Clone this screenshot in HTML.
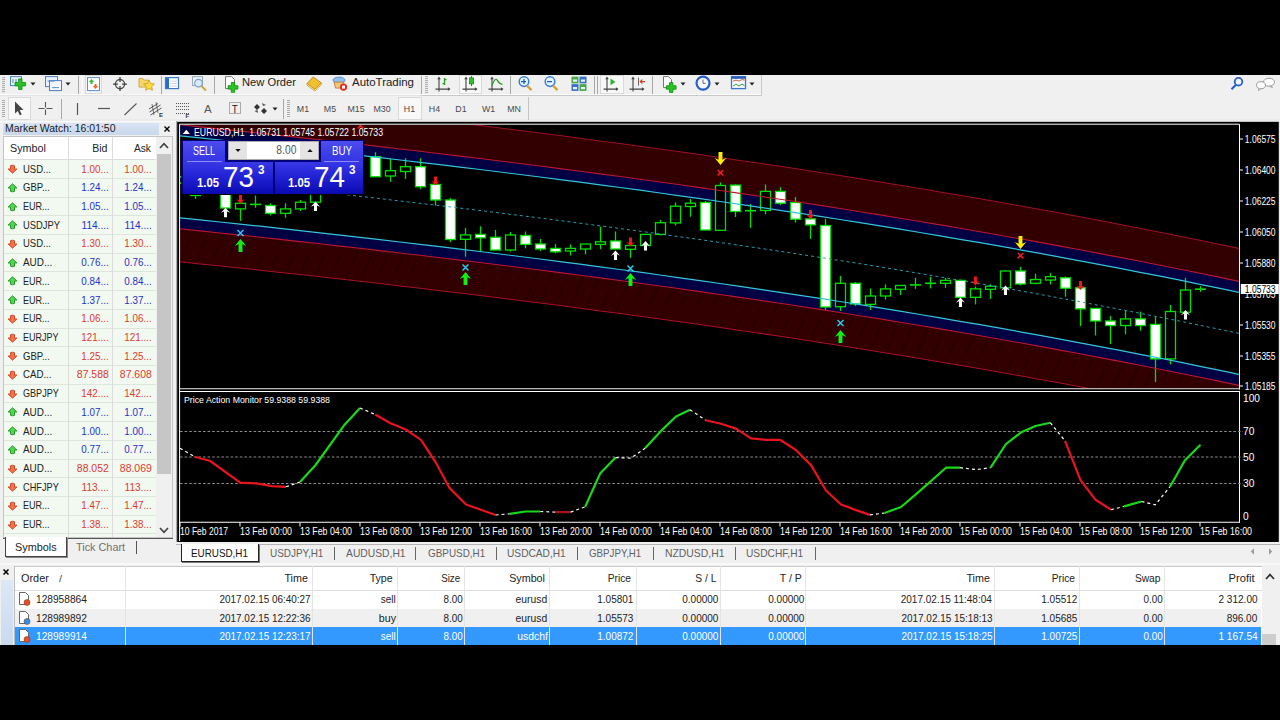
<!DOCTYPE html>
<html><head><meta charset="utf-8"><title>MetaTrader</title>
<style>
*{box-sizing:border-box;margin:0;padding:0}
html,body{width:1280px;height:720px;overflow:hidden;background:#000}
body{position:relative;font-family:'Liberation Sans',sans-serif;font-size:12px;color:#000}
.abs,.b{position:absolute}
.t{position:absolute;white-space:nowrap;line-height:14px}
</style></head><body>
<div class="abs" style="left:0;top:75px;width:1280px;height:47px;background:#f0f0f0"><svg width="1280" height="47" viewBox="0 75 1280 47" style="position:absolute;left:0;top:0" font-family="'Liberation Sans',sans-serif">
<rect x="0" y="94" width="762" height="1" fill="#fcfcfc"/>
<rect x="0" y="95" width="762" height="1" fill="#dcdcdc" opacity="0.6"/>
<rect x="0" y="119.700" width="1280" height="1" fill="#e2e2e2"/>
<rect x="0" y="120.700" width="1280" height="1.300" fill="#fafafa"/>
<rect x="2" y="100" width="3" height="1" fill="#aaa"/>
<rect x="2" y="102" width="3" height="1" fill="#aaa"/>
<rect x="2" y="104" width="3" height="1" fill="#aaa"/>
<rect x="2" y="106" width="3" height="1" fill="#aaa"/>
<rect x="2" y="108" width="3" height="1" fill="#aaa"/>
<rect x="2" y="110" width="3" height="1" fill="#aaa"/>
<rect x="2" y="112" width="3" height="1" fill="#aaa"/>
<rect x="2" y="114" width="3" height="1" fill="#aaa"/>
<rect x="2" y="116" width="3" height="1" fill="#aaa"/>
<g transform="translate(0,-0.9)">
<rect x="2" y="78" width="3" height="1" fill="#aaa"/>
<rect x="2" y="80" width="3" height="1" fill="#aaa"/>
<rect x="2" y="82" width="3" height="1" fill="#aaa"/>
<rect x="2" y="84" width="3" height="1" fill="#aaa"/>
<rect x="2" y="86" width="3" height="1" fill="#aaa"/>
<rect x="2" y="88" width="3" height="1" fill="#aaa"/>
<rect x="2" y="90" width="3" height="1" fill="#aaa"/>
<rect x="2" y="92" width="3" height="1" fill="#aaa"/>
<rect x="10.5" y="77.5" width="11" height="9" fill="#eaf2fc" stroke="#4a84c8"/>
<path d="M13 84 v-4 m3 3 v-3" stroke="#4a84c8" stroke-width="1"/>
<path d="M18.600 79.800 h3.400 v3.600 h3.600 v3.400 h-3.600 v3.600 h-3.400 v-3.600 h-3.600 v-3.400 h3.600 z" fill="#28c428" stroke="#0c8a0c" stroke-width="0.8"/>
<path d="M30.5 83.5 h5 l-2.5 3 z" fill="#222"/>
<rect x="45.500" y="77.500" width="12" height="10" fill="#eaf2fc" stroke="#4a7ec0"/>
<rect x="49.500" y="81.500" width="12" height="10" fill="#f4f8fe" stroke="#4a7ec0"/>
<path d="M47.5 82 h7 M52 88.500 h7" stroke="#5a8ed0" stroke-width="1"/>
<path d="M65.5 83.5 h5 l-2.5 3 z" fill="#222"/>
<rect x="78.0" y="77" width="1" height="18" fill="#a8a8a8"/>
<rect x="81.500" y="77" width="1.500" height="18" fill="#fafafa"/>
<rect x="85.5" y="76.5" width="16.0" height="18.0" fill="#f8f8f8" stroke="#d9d9d9" stroke-width="1"/>
<rect x="87.5" y="78.500" width="12" height="13" fill="#fff" stroke="#5a8ed0"/>
<path d="M91.5 80 l2.6 3 h-1.6 v2 h-2 v-2 h-1.600 z" fill="#30c030"/>
<path d="M95.500 90 l-2.600 -3 h1.600 v-2 h2 v2 h1.600 z" fill="#f06030"/>
<circle cx="120" cy="85" r="4.6" fill="none" stroke="#444" stroke-width="1.3"/>
<path d="M120 78 v5 m0 4 v5 M113 85 h5 m4 0 h5" stroke="#444" stroke-width="1.3"/>
<path d="M139 79.500 h4 l1 1.500 h5 v7 h-10 z" fill="#f6d66a" stroke="#c8a030" stroke-width="0.8"/>
<path d="M149 81 l1.700 3.400 3.700 0.500 -2.700 2.600 0.700 3.700 -3.400 -1.800 -3.400 1.800 0.700 -3.700 -2.700 -2.600 3.700 -0.500 z" fill="#ffd83a" stroke="#c89a18" stroke-width="0.8"/>
<rect x="161.0" y="77" width="1" height="18" fill="#a8a8a8"/>
<rect x="165.500" y="78.500" width="13" height="11" fill="#fff" stroke="#3c78c0" stroke-width="1.2"/>
<rect x="166" y="79" width="3" height="10" fill="#2a6ad0"/>
<path d="M170 82 h7 M170 84.500 h7 M170 87 h7" stroke="#c0c8d8" stroke-width="0.8"/>
<rect x="192.500" y="77.500" width="10" height="9" fill="#eef2f8" stroke="#9ab"/>
<circle cx="198.500" cy="84" r="3.800" fill="#d8ecfc" stroke="#7aa0c8" stroke-width="1.2"/>
<path d="M201.500 87 l4.500 4.500" stroke="#d8a030" stroke-width="2"/>
<rect x="214.0" y="77" width="1" height="18" fill="#a8a8a8"/>
<path d="M225.500 77.500 h6 l3 3 v9 h-9 z" fill="#fff" stroke="#777" stroke-width="1"/>
<path d="M231.300 83.400 h3.400 v3.200 h3.200 v3.400 h-3.200 v3.200 h-3.400 v-3.200 h-3.200 v-3.400 h3.200 z" fill="#28c428" stroke="#0c8a0c" stroke-width="0.8"/>
<text x="242" y="87.300" font-size="11.6" fill="#222" textLength="54" lengthAdjust="spacingAndGlyphs">New Order</text>
<path d="M307 84.500 L313.200 77.800 L321.300 83.800 L315 90.300 Z" fill="#f0c030" stroke="#b8860c" stroke-width="0.900"/>
<path d="M307 84.500 L315 90.300 L321.300 83.800 L321.300 85.600 L315 92 L307 86.300 Z" fill="#fbe9a0" stroke="#b8860c" stroke-width="0.600"/>
<ellipse cx="339" cy="81" rx="6" ry="3" fill="#8ec0f0" stroke="#4a80c0" stroke-width="0.8"/>
<path d="M334 83 h10 l-1.500 6 h-7 z" fill="#f0c878" stroke="#a87a30" stroke-width="0.8"/>
<circle cx="343.500" cy="88" r="3.600" fill="#e82a1a"/><rect x="342" y="86.500" width="3" height="3" fill="#fff"/>
<text x="352" y="87.300" font-size="11.6" fill="#222" textLength="62" lengthAdjust="spacingAndGlyphs">AutoTrading</text>
<rect x="421.0" y="77" width="1" height="18" fill="#a8a8a8"/>
<rect x="425" y="77" width="3" height="1" fill="#aaa"/>
<rect x="425" y="79" width="3" height="1" fill="#aaa"/>
<rect x="425" y="81" width="3" height="1" fill="#aaa"/>
<rect x="425" y="83" width="3" height="1" fill="#aaa"/>
<rect x="425" y="85" width="3" height="1" fill="#aaa"/>
<rect x="425" y="87" width="3" height="1" fill="#aaa"/>
<rect x="425" y="89" width="3" height="1" fill="#aaa"/>
<rect x="425" y="91" width="3" height="1" fill="#aaa"/>
<rect x="425" y="93" width="3" height="1" fill="#aaa"/>
<path d="M439.0 79 v13.500 M435.5 90 h14" stroke="#444" stroke-width="1.100" fill="none"/><path d="M439.0 77.500 l-1.800 2.600 h3.600 z M450.5 90 l-2.600 -1.800 v3.600 z" fill="#444"/>
<path d="M444.500 79 v7 M442.500 84.500 h2 M444.500 80.500 h2" stroke="#2a9a2a" stroke-width="1.300" fill="none"/>
<rect x="459.5" y="76.5" width="22.0" height="18.0" fill="#f8f8f8" stroke="#d9d9d9" stroke-width="1"/>
<path d="M466.0 79 v13.500 M462.5 90 h14" stroke="#444" stroke-width="1.100" fill="none"/><path d="M466.0 77.500 l-1.800 2.600 h3.600 z M477.5 90 l-2.600 -1.800 v3.600 z" fill="#444"/>
<path d="M471.500 77 v10" stroke="#1a8a1a" stroke-width="1"/><rect x="469.500" y="78.800" width="4" height="6" fill="#30c030" stroke="#1a8a1a" stroke-width="0.800"/>
<path d="M492.0 79 v13.500 M488.5 90 h14" stroke="#444" stroke-width="1.100" fill="none"/><path d="M492.0 77.500 l-1.800 2.600 h3.600 z M503.5 90 l-2.600 -1.800 v3.600 z" fill="#444"/>
<path d="M492 86.500 q3 -9 5.500 -5 t5 3.500" stroke="#2a9a2a" stroke-width="1.200" fill="none"/>
<rect x="510.0" y="77" width="1" height="18" fill="#a8a8a8"/>
<circle cx="524" cy="82.500" r="4.800" fill="#e8f4ff" stroke="#3a80d0" stroke-width="1.500"/>
<path d="M527 86.500 l4.500 4.500" stroke="#d8a030" stroke-width="2.200"/>
<path d="M521 82.500 h5" stroke="#2060b0" stroke-width="1.300"/>
<path d="M524 80 v5" stroke="#2060b0" stroke-width="1.300"/>
<circle cx="550" cy="82.500" r="4.800" fill="#e8f4ff" stroke="#3a80d0" stroke-width="1.500"/>
<path d="M553 86.500 l4.500 4.500" stroke="#d8a030" stroke-width="2.200"/>
<path d="M547 82.500 h5" stroke="#2060b0" stroke-width="1.300"/>
<rect x="571.500" y="77.500" width="7" height="6.800" fill="#4aa848"/><rect x="579.500" y="77.500" width="7" height="6.800" fill="#3a70cc"/>
<rect x="571.500" y="85" width="7" height="6.800" fill="#3a70cc"/><rect x="579.500" y="85" width="7" height="6.800" fill="#4aa848"/>
<path d="M573 81.500 h4 M581 81.500 h4 M573 89 h4 M581 89 h4" stroke="#e8f0ff" stroke-width="2.200"/>
<rect x="594.0" y="77" width="1" height="18" fill="#a8a8a8"/>
<rect x="597.0" y="77" width="1" height="18" fill="#a8a8a8"/>
<rect x="600.5" y="76.5" width="23.0" height="18.0" fill="#f8f8f8" stroke="#d9d9d9" stroke-width="1"/>
<path d="M607.0 79 v13.500 M603.5 90 h14" stroke="#444" stroke-width="1.100" fill="none"/><path d="M607.0 77.500 l-1.800 2.600 h3.600 z M618.5 90 l-2.600 -1.800 v3.600 z" fill="#444"/>
<path d="M610.500 79.500 l5 3.300 -5 3.300 z" fill="#30b030"/>
<path d="M633.0 79 v13.500 M629.5 90 h14" stroke="#444" stroke-width="1.100" fill="none"/><path d="M633.0 77.500 l-1.800 2.600 h3.600 z M644.5 90 l-2.600 -1.800 v3.600 z" fill="#444"/>
<path d="M638.500 78.500 v8" stroke="#666" stroke-width="1"/><path d="M645 82.500 h-4.500 m1.800 -2 l-2 2 2 2" stroke="#d04020" stroke-width="1.200" fill="none"/>
<rect x="652.0" y="77" width="1" height="18" fill="#a8a8a8"/>
<path d="M663.500 77.500 h5 l3 3 v8 h-8 z" fill="#fff" stroke="#777" stroke-width="1"/>
<path d="M669.500 83.500 h3.400 v3.200 h3.200 v3.400 h-3.200 v3.200 h-3.400 v-3.200 h-3.200 v-3.400 h3.200 z" fill="#28c428" stroke="#0c8a0c" stroke-width="0.800"/>
<path d="M680.5 83.5 h5 l-2.5 3 z" fill="#222"/>
<circle cx="703" cy="84" r="6.500" fill="#f4f8ff" stroke="#2a5ec8" stroke-width="2.200"/>
<path d="M703 80.500 v3.800 h2.600" stroke="#666" stroke-width="1" fill="none"/>
<path d="M714.5 83.5 h5 l-2.5 3 z" fill="#222"/>
<rect x="731.500" y="77.500" width="14" height="12" fill="#f4f8ff" stroke="#3a78c8" stroke-width="1.300"/><rect x="731.500" y="77.500" width="14" height="2.200" fill="#2a5cb8"/>
<path d="M733 82 l3 -1 3 1 3 -1.500 2.500 0.500" stroke="#d05030" stroke-width="0.900" fill="none"/>
<path d="M733 87 l3 -2 3 2 3 -2 2.500 1.500" stroke="#2a9a2a" stroke-width="0.900" fill="none"/>
<path d="M749.5 83.5 h5 l-2.5 3 z" fill="#222"/>
<path d="M761.500 75 V96.400 H421" stroke="#c8c8c8" stroke-width="1" fill="none"/>
<g transform="translate(0,1.6)">
<circle cx="1238.500" cy="81" r="3.800" fill="#f4f8ff" stroke="#2a5ec8" stroke-width="1.800"/>
<path d="M1236 84 l-4.500 4.500" stroke="#2a5ec8" stroke-width="2.200"/>
<ellipse cx="1269" cy="81.500" rx="5.500" ry="4" fill="#fff" stroke="#9a9a9a" stroke-width="1"/>
<ellipse cx="1261" cy="84.500" rx="4.500" ry="3.500" fill="#fff" stroke="#9a9a9a" stroke-width="1"/>
<path d="M1259 87.500 l-0.500 2.500 2.500 -2 M1271 85 l1.500 2 -3 -1.500" stroke="#9a9a9a" stroke-width="0.900" fill="#fff"/>
</g>
</g>
<rect x="8.5" y="97.5" width="22.0" height="22.0" fill="#f8f8f8" stroke="#d9d9d9" stroke-width="1"/>
<path d="M15 101.500 v12 l2.800 -2.600 2 4.400 1.900 -0.900 -2 -4.300 3.800 -0.200 z" fill="#454545"/>
<path d="M45.500 102 v13 M38.500 108.500 h14" stroke="#555" stroke-width="1.100"/>
<rect x="44.500" y="107.500" width="2" height="2" fill="#f0f0f0"/>
<rect x="61.0" y="99" width="1" height="20" fill="#a8a8a8"/>
<path d="M77.500 103 v12" stroke="#555" stroke-width="1.200"/>
<path d="M98 108.500 h12" stroke="#555" stroke-width="1.200"/>
<path d="M124.500 115 l12 -11.500" stroke="#606060" stroke-width="1.200"/>
<path d="M149.500 112 l11 -7 M150.500 115 l11 -7 M149 109 l9 -5.500" stroke="#444" stroke-width="0.900"/>
<path d="M152 104 l2 11 M156 102 l2 11" stroke="#444" stroke-width="0.700"/>
<text x="159" y="116.500" font-size="6" font-weight="bold" fill="#333">E</text>
<path d="M176 103.5 h13" stroke="#555" stroke-width="1" stroke-dasharray="1 1"/>
<path d="M176 106.5 h13" stroke="#555" stroke-width="1" stroke-dasharray="1 1"/>
<path d="M176 109.5 h13" stroke="#555" stroke-width="1" stroke-dasharray="1 1"/>
<path d="M176 113.5 h13" stroke="#555" stroke-width="1" stroke-dasharray="1 1"/>
<text x="185.500" y="117.500" font-size="6" font-weight="bold" fill="#333">F</text>
<text x="204" y="112.800" font-size="11.500" fill="#555">A</text>
<rect x="229.500" y="102.500" width="11" height="11" fill="none" stroke="#666" stroke-width="1" stroke-dasharray="1 1"/>
<text x="231.800" y="112.500" font-size="10" fill="#222">T</text>
<path d="M257 104 l3 3 -3 3 -3 -3 z M264 108 l3 3 -3 3 -3 -3 z" fill="#333"/>
<path d="M262 103 l4 2 -3 1 z M258 113 l-3.500 -2 3 -1 z" fill="#555"/>
<path d="M272.5 107.5 h5 l-2.5 3 z" fill="#222"/>
<rect x="283.0" y="99" width="1" height="20" fill="#a8a8a8"/>
<rect x="287" y="100" width="3" height="1" fill="#aaa"/>
<rect x="287" y="102" width="3" height="1" fill="#aaa"/>
<rect x="287" y="104" width="3" height="1" fill="#aaa"/>
<rect x="287" y="106" width="3" height="1" fill="#aaa"/>
<rect x="287" y="108" width="3" height="1" fill="#aaa"/>
<rect x="287" y="110" width="3" height="1" fill="#aaa"/>
<rect x="287" y="112" width="3" height="1" fill="#aaa"/>
<rect x="287" y="114" width="3" height="1" fill="#aaa"/>
<rect x="287" y="116" width="3" height="1" fill="#aaa"/>
<rect x="398.5" y="97.5" width="23.0" height="22.0" fill="#f8f8f8" stroke="#d9d9d9" stroke-width="1"/>
<text x="303.0" y="112.300" font-size="9.800" fill="#4a4a4a" text-anchor="middle" textLength="12.3" lengthAdjust="spacingAndGlyphs">M1</text>
<text x="330.0" y="112.300" font-size="9.800" fill="#4a4a4a" text-anchor="middle" textLength="12.3" lengthAdjust="spacingAndGlyphs">M5</text>
<text x="356.0" y="112.300" font-size="9.800" fill="#4a4a4a" text-anchor="middle" textLength="17.2" lengthAdjust="spacingAndGlyphs">M15</text>
<text x="382.0" y="112.300" font-size="9.800" fill="#4a4a4a" text-anchor="middle" textLength="17.2" lengthAdjust="spacingAndGlyphs">M30</text>
<text x="409.5" y="112.300" font-size="9.800" fill="#4a4a4a" text-anchor="middle" textLength="11.3" lengthAdjust="spacingAndGlyphs">H1</text>
<text x="434.5" y="112.300" font-size="9.800" fill="#4a4a4a" text-anchor="middle" textLength="11.3" lengthAdjust="spacingAndGlyphs">H4</text>
<text x="461.0" y="112.300" font-size="9.800" fill="#4a4a4a" text-anchor="middle" textLength="11.3" lengthAdjust="spacingAndGlyphs">D1</text>
<text x="488.5" y="112.300" font-size="9.800" fill="#4a4a4a" text-anchor="middle" textLength="13.2" lengthAdjust="spacingAndGlyphs">W1</text>
<text x="514.0" y="112.300" font-size="9.800" fill="#4a4a4a" text-anchor="middle" textLength="13.7" lengthAdjust="spacingAndGlyphs">MN</text>
<path d="M528.500 97 V120" stroke="#c4c4c4" stroke-width="1" fill="none"/>
</svg></div>
<div class="b" style="left:0px;top:122px;width:176px;height:441px;background:#f0f0f0;"></div>
<div class="b" style="left:0px;top:121px;width:176px;height:1px;background:#fafafa;"></div>
<div class="b" style="left:3px;top:123px;width:156px;height:11.5px;background:linear-gradient(#d9e4f3,#c8d7ec);"></div>
<div class="t" style="top:122.4px;font-size:10.0px;color:#1a1a1a;left:5.0px;transform:scaleX(1.044);transform-origin:0 50%;">Market Watch: 16:01:50</div>
<svg class="abs" style="left:163.5px;top:125.5px" width="6" height="6" viewBox="0 0 6 6"><path d="M0.500 0.500 L5.500 5.500 M5.500 0.500 L0.500 5.500" stroke="#000" stroke-width="1.400"/></svg>
<div class="b" style="left:3px;top:136px;width:170px;height:402px;background:#fff;border:1px solid #c4c4c4"></div>
<div class="b" style="left:4px;top:137px;width:152px;height:22.6px;background:#fff;border-bottom:1px solid #dcdcdc"></div>
<div class="t" style="top:141.0px;font-size:11.4px;color:#222;left:9.5px;transform:scaleX(0.944);transform-origin:0 50%;">Symbol</div>
<div class="t" style="top:141.0px;font-size:11.4px;color:#222;right:1173.0px;transform:scaleX(0.928);transform-origin:100% 50%;">Bid</div>
<div class="t" style="top:141.0px;font-size:11.4px;color:#222;right:1129.0px;transform:scaleX(0.898);transform-origin:100% 50%;">Ask</div>
<div class="b" style="left:4px;top:159.7px;width:152px;height:377.3px;background:#f1f9f1;"></div>
<div class="b" style="left:4px;top:177.91px;width:152px;height:1px;background:#dde5dd;"></div>
<svg class="abs" style="left:7.2px;top:164.2px" width="11" height="10" viewBox="0 0 11 10"><path d="M5.500 9.200 L9.900 5 H7.500 V1.700 Q5.500 0.700 3.500 1.700 V5 H1.100 Z" fill="#f87048" stroke="#c84020" stroke-width="0.900"/></svg>
<div class="t" style="top:161.6px;font-size:11.4px;color:#222;left:22.5px;transform:scaleX(0.834);transform-origin:0 50%;">USD...</div>
<div class="t" style="top:161.6px;font-size:11.4px;color:#e03a30;right:1171.6px;transform:scaleX(0.862);transform-origin:100% 50%;">1.00...</div>
<div class="t" style="top:161.6px;font-size:11.4px;color:#e03a30;right:1128.1px;transform:scaleX(0.862);transform-origin:100% 50%;">1.00...</div>
<div class="b" style="left:4px;top:196.62px;width:152px;height:1px;background:#dde5dd;"></div>
<svg class="abs" style="left:7.2px;top:182.9px" width="11" height="10" viewBox="0 0 11 10"><path d="M5.500 0.800 L9.900 5 H7.500 V8.300 Q5.500 9.300 3.500 8.300 V5 H1.100 Z" fill="#4fd84f" stroke="#1f8f1f" stroke-width="0.900"/></svg>
<div class="t" style="top:180.3px;font-size:11.4px;color:#222;left:22.5px;transform:scaleX(0.839);transform-origin:0 50%;">GBP...</div>
<div class="t" style="top:180.3px;font-size:11.4px;color:#2832c8;right:1171.6px;transform:scaleX(0.862);transform-origin:100% 50%;">1.24...</div>
<div class="t" style="top:180.3px;font-size:11.4px;color:#2832c8;right:1128.1px;transform:scaleX(0.862);transform-origin:100% 50%;">1.24...</div>
<div class="b" style="left:4px;top:215.33px;width:152px;height:1px;background:#dde5dd;"></div>
<svg class="abs" style="left:7.2px;top:201.6px" width="11" height="10" viewBox="0 0 11 10"><path d="M5.500 0.800 L9.900 5 H7.500 V8.300 Q5.500 9.300 3.500 8.300 V5 H1.100 Z" fill="#4fd84f" stroke="#1f8f1f" stroke-width="0.900"/></svg>
<div class="t" style="top:199.0px;font-size:11.4px;color:#222;left:22.5px;transform:scaleX(0.793);transform-origin:0 50%;">EUR...</div>
<div class="t" style="top:199.0px;font-size:11.4px;color:#2832c8;right:1171.6px;transform:scaleX(0.862);transform-origin:100% 50%;">1.05...</div>
<div class="t" style="top:199.0px;font-size:11.4px;color:#2832c8;right:1128.1px;transform:scaleX(0.862);transform-origin:100% 50%;">1.05...</div>
<div class="b" style="left:4px;top:234.04px;width:152px;height:1px;background:#dde5dd;"></div>
<svg class="abs" style="left:7.2px;top:220.3px" width="11" height="10" viewBox="0 0 11 10"><path d="M5.500 0.800 L9.900 5 H7.500 V8.300 Q5.500 9.300 3.500 8.300 V5 H1.100 Z" fill="#4fd84f" stroke="#1f8f1f" stroke-width="0.900"/></svg>
<div class="t" style="top:217.7px;font-size:11.4px;color:#222;left:22.5px;transform:scaleX(0.822);transform-origin:0 50%;">USDJPY</div>
<div class="t" style="top:217.7px;font-size:11.4px;color:#2832c8;right:1171.6px;transform:scaleX(0.886);transform-origin:100% 50%;">114....</div>
<div class="t" style="top:217.7px;font-size:11.4px;color:#2832c8;right:1128.1px;transform:scaleX(0.886);transform-origin:100% 50%;">114....</div>
<div class="b" style="left:4px;top:252.75px;width:152px;height:1px;background:#dde5dd;"></div>
<svg class="abs" style="left:7.2px;top:239.0px" width="11" height="10" viewBox="0 0 11 10"><path d="M5.500 9.200 L9.900 5 H7.500 V1.700 Q5.500 0.700 3.500 1.700 V5 H1.100 Z" fill="#f87048" stroke="#c84020" stroke-width="0.900"/></svg>
<div class="t" style="top:236.4px;font-size:11.4px;color:#222;left:22.5px;transform:scaleX(0.834);transform-origin:0 50%;">USD...</div>
<div class="t" style="top:236.4px;font-size:11.4px;color:#e03a30;right:1171.6px;transform:scaleX(0.862);transform-origin:100% 50%;">1.30...</div>
<div class="t" style="top:236.4px;font-size:11.4px;color:#e03a30;right:1128.1px;transform:scaleX(0.862);transform-origin:100% 50%;">1.30...</div>
<div class="b" style="left:4px;top:271.46px;width:152px;height:1px;background:#dde5dd;"></div>
<svg class="abs" style="left:7.2px;top:257.7px" width="11" height="10" viewBox="0 0 11 10"><path d="M5.500 0.800 L9.900 5 H7.500 V8.300 Q5.500 9.300 3.500 8.300 V5 H1.100 Z" fill="#4fd84f" stroke="#1f8f1f" stroke-width="0.900"/></svg>
<div class="t" style="top:255.1px;font-size:11.4px;color:#222;left:22.5px;transform:scaleX(0.871);transform-origin:0 50%;">AUD...</div>
<div class="t" style="top:255.1px;font-size:11.4px;color:#2832c8;right:1171.6px;transform:scaleX(0.862);transform-origin:100% 50%;">0.76...</div>
<div class="t" style="top:255.1px;font-size:11.4px;color:#2832c8;right:1128.1px;transform:scaleX(0.862);transform-origin:100% 50%;">0.76...</div>
<div class="b" style="left:4px;top:290.17px;width:152px;height:1px;background:#dde5dd;"></div>
<svg class="abs" style="left:7.2px;top:276.4px" width="11" height="10" viewBox="0 0 11 10"><path d="M5.500 0.800 L9.900 5 H7.500 V8.300 Q5.500 9.300 3.500 8.300 V5 H1.100 Z" fill="#4fd84f" stroke="#1f8f1f" stroke-width="0.900"/></svg>
<div class="t" style="top:273.8px;font-size:11.4px;color:#222;left:22.5px;transform:scaleX(0.793);transform-origin:0 50%;">EUR...</div>
<div class="t" style="top:273.8px;font-size:11.4px;color:#2832c8;right:1171.6px;transform:scaleX(0.862);transform-origin:100% 50%;">0.84...</div>
<div class="t" style="top:273.8px;font-size:11.4px;color:#2832c8;right:1128.1px;transform:scaleX(0.862);transform-origin:100% 50%;">0.84...</div>
<div class="b" style="left:4px;top:308.88px;width:152px;height:1px;background:#dde5dd;"></div>
<svg class="abs" style="left:7.2px;top:295.1px" width="11" height="10" viewBox="0 0 11 10"><path d="M5.500 0.800 L9.900 5 H7.500 V8.300 Q5.500 9.300 3.500 8.300 V5 H1.100 Z" fill="#4fd84f" stroke="#1f8f1f" stroke-width="0.900"/></svg>
<div class="t" style="top:292.5px;font-size:11.4px;color:#222;left:22.5px;transform:scaleX(0.793);transform-origin:0 50%;">EUR...</div>
<div class="t" style="top:292.5px;font-size:11.4px;color:#2832c8;right:1171.6px;transform:scaleX(0.862);transform-origin:100% 50%;">1.37...</div>
<div class="t" style="top:292.5px;font-size:11.4px;color:#2832c8;right:1128.1px;transform:scaleX(0.862);transform-origin:100% 50%;">1.37...</div>
<div class="b" style="left:4px;top:327.59px;width:152px;height:1px;background:#dde5dd;"></div>
<svg class="abs" style="left:7.2px;top:313.8px" width="11" height="10" viewBox="0 0 11 10"><path d="M5.500 9.200 L9.900 5 H7.500 V1.700 Q5.500 0.700 3.500 1.700 V5 H1.100 Z" fill="#f87048" stroke="#c84020" stroke-width="0.900"/></svg>
<div class="t" style="top:311.2px;font-size:11.4px;color:#222;left:22.5px;transform:scaleX(0.793);transform-origin:0 50%;">EUR...</div>
<div class="t" style="top:311.2px;font-size:11.4px;color:#e03a30;right:1171.6px;transform:scaleX(0.862);transform-origin:100% 50%;">1.06...</div>
<div class="t" style="top:311.2px;font-size:11.4px;color:#e03a30;right:1128.1px;transform:scaleX(0.862);transform-origin:100% 50%;">1.06...</div>
<div class="b" style="left:4px;top:346.3px;width:152px;height:1px;background:#dde5dd;"></div>
<svg class="abs" style="left:7.2px;top:332.5px" width="11" height="10" viewBox="0 0 11 10"><path d="M5.500 9.200 L9.900 5 H7.500 V1.700 Q5.500 0.700 3.500 1.700 V5 H1.100 Z" fill="#f87048" stroke="#c84020" stroke-width="0.900"/></svg>
<div class="t" style="top:329.9px;font-size:11.4px;color:#222;left:22.5px;transform:scaleX(0.791);transform-origin:0 50%;">EURJPY</div>
<div class="t" style="top:329.9px;font-size:11.4px;color:#e03a30;right:1171.6px;transform:scaleX(0.862);transform-origin:100% 50%;">121....</div>
<div class="t" style="top:329.9px;font-size:11.4px;color:#e03a30;right:1128.1px;transform:scaleX(0.862);transform-origin:100% 50%;">121....</div>
<div class="b" style="left:4px;top:365.01px;width:152px;height:1px;background:#dde5dd;"></div>
<svg class="abs" style="left:7.2px;top:351.3px" width="11" height="10" viewBox="0 0 11 10"><path d="M5.500 9.200 L9.900 5 H7.500 V1.700 Q5.500 0.700 3.500 1.700 V5 H1.100 Z" fill="#f87048" stroke="#c84020" stroke-width="0.900"/></svg>
<div class="t" style="top:348.7px;font-size:11.4px;color:#222;left:22.5px;transform:scaleX(0.839);transform-origin:0 50%;">GBP...</div>
<div class="t" style="top:348.7px;font-size:11.4px;color:#e03a30;right:1171.6px;transform:scaleX(0.862);transform-origin:100% 50%;">1.25...</div>
<div class="t" style="top:348.7px;font-size:11.4px;color:#e03a30;right:1128.1px;transform:scaleX(0.862);transform-origin:100% 50%;">1.25...</div>
<div class="b" style="left:4px;top:383.72px;width:152px;height:1px;background:#dde5dd;"></div>
<svg class="abs" style="left:7.2px;top:370.0px" width="11" height="10" viewBox="0 0 11 10"><path d="M5.500 9.200 L9.900 5 H7.500 V1.700 Q5.500 0.700 3.500 1.700 V5 H1.100 Z" fill="#f87048" stroke="#c84020" stroke-width="0.900"/></svg>
<div class="t" style="top:367.4px;font-size:11.4px;color:#222;left:22.5px;transform:scaleX(0.849);transform-origin:0 50%;">CAD...</div>
<div class="t" style="top:367.4px;font-size:11.4px;color:#e03a30;right:1171.6px;transform:scaleX(0.919);transform-origin:100% 50%;">87.588</div>
<div class="t" style="top:367.4px;font-size:11.4px;color:#e03a30;right:1128.1px;transform:scaleX(0.919);transform-origin:100% 50%;">87.608</div>
<div class="b" style="left:4px;top:402.43px;width:152px;height:1px;background:#dde5dd;"></div>
<svg class="abs" style="left:7.2px;top:388.7px" width="11" height="10" viewBox="0 0 11 10"><path d="M5.500 9.200 L9.900 5 H7.500 V1.700 Q5.500 0.700 3.500 1.700 V5 H1.100 Z" fill="#f87048" stroke="#c84020" stroke-width="0.900"/></svg>
<div class="t" style="top:386.1px;font-size:11.4px;color:#222;left:22.5px;transform:scaleX(0.797);transform-origin:0 50%;">GBPJPY</div>
<div class="t" style="top:386.1px;font-size:11.4px;color:#e03a30;right:1171.6px;transform:scaleX(0.862);transform-origin:100% 50%;">142....</div>
<div class="t" style="top:386.1px;font-size:11.4px;color:#e03a30;right:1128.1px;transform:scaleX(0.862);transform-origin:100% 50%;">142....</div>
<div class="b" style="left:4px;top:421.14px;width:152px;height:1px;background:#dde5dd;"></div>
<svg class="abs" style="left:7.2px;top:407.4px" width="11" height="10" viewBox="0 0 11 10"><path d="M5.500 0.800 L9.900 5 H7.500 V8.300 Q5.500 9.300 3.500 8.300 V5 H1.100 Z" fill="#4fd84f" stroke="#1f8f1f" stroke-width="0.900"/></svg>
<div class="t" style="top:404.8px;font-size:11.4px;color:#222;left:22.5px;transform:scaleX(0.871);transform-origin:0 50%;">AUD...</div>
<div class="t" style="top:404.8px;font-size:11.4px;color:#2832c8;right:1171.6px;transform:scaleX(0.862);transform-origin:100% 50%;">1.07...</div>
<div class="t" style="top:404.8px;font-size:11.4px;color:#2832c8;right:1128.1px;transform:scaleX(0.862);transform-origin:100% 50%;">1.07...</div>
<div class="b" style="left:4px;top:439.85px;width:152px;height:1px;background:#dde5dd;"></div>
<svg class="abs" style="left:7.2px;top:426.1px" width="11" height="10" viewBox="0 0 11 10"><path d="M5.500 0.800 L9.900 5 H7.500 V8.300 Q5.500 9.300 3.500 8.300 V5 H1.100 Z" fill="#4fd84f" stroke="#1f8f1f" stroke-width="0.900"/></svg>
<div class="t" style="top:423.5px;font-size:11.4px;color:#222;left:22.5px;transform:scaleX(0.871);transform-origin:0 50%;">AUD...</div>
<div class="t" style="top:423.5px;font-size:11.4px;color:#2832c8;right:1171.6px;transform:scaleX(0.862);transform-origin:100% 50%;">1.00...</div>
<div class="t" style="top:423.5px;font-size:11.4px;color:#2832c8;right:1128.1px;transform:scaleX(0.862);transform-origin:100% 50%;">1.00...</div>
<div class="b" style="left:4px;top:458.56px;width:152px;height:1px;background:#dde5dd;"></div>
<svg class="abs" style="left:7.2px;top:444.8px" width="11" height="10" viewBox="0 0 11 10"><path d="M5.500 0.800 L9.900 5 H7.500 V8.300 Q5.500 9.300 3.500 8.300 V5 H1.100 Z" fill="#4fd84f" stroke="#1f8f1f" stroke-width="0.900"/></svg>
<div class="t" style="top:442.2px;font-size:11.4px;color:#222;left:22.5px;transform:scaleX(0.871);transform-origin:0 50%;">AUD...</div>
<div class="t" style="top:442.2px;font-size:11.4px;color:#2832c8;right:1171.6px;transform:scaleX(0.862);transform-origin:100% 50%;">0.77...</div>
<div class="t" style="top:442.2px;font-size:11.4px;color:#2832c8;right:1128.1px;transform:scaleX(0.862);transform-origin:100% 50%;">0.77...</div>
<div class="b" style="left:4px;top:477.27px;width:152px;height:1px;background:#dde5dd;"></div>
<svg class="abs" style="left:7.2px;top:463.5px" width="11" height="10" viewBox="0 0 11 10"><path d="M5.500 9.200 L9.900 5 H7.500 V1.700 Q5.500 0.700 3.500 1.700 V5 H1.100 Z" fill="#f87048" stroke="#c84020" stroke-width="0.900"/></svg>
<div class="t" style="top:460.9px;font-size:11.4px;color:#222;left:22.5px;transform:scaleX(0.871);transform-origin:0 50%;">AUD...</div>
<div class="t" style="top:460.9px;font-size:11.4px;color:#e03a30;right:1171.6px;transform:scaleX(0.919);transform-origin:100% 50%;">88.052</div>
<div class="t" style="top:460.9px;font-size:11.4px;color:#e03a30;right:1128.1px;transform:scaleX(0.919);transform-origin:100% 50%;">88.069</div>
<div class="b" style="left:4px;top:495.98px;width:152px;height:1px;background:#dde5dd;"></div>
<svg class="abs" style="left:7.2px;top:482.2px" width="11" height="10" viewBox="0 0 11 10"><path d="M5.500 9.200 L9.900 5 H7.500 V1.700 Q5.500 0.700 3.500 1.700 V5 H1.100 Z" fill="#f87048" stroke="#c84020" stroke-width="0.900"/></svg>
<div class="t" style="top:479.6px;font-size:11.4px;color:#222;left:22.5px;transform:scaleX(0.808);transform-origin:0 50%;">CHFJPY</div>
<div class="t" style="top:479.6px;font-size:11.4px;color:#e03a30;right:1171.6px;transform:scaleX(0.886);transform-origin:100% 50%;">113....</div>
<div class="t" style="top:479.6px;font-size:11.4px;color:#e03a30;right:1128.1px;transform:scaleX(0.886);transform-origin:100% 50%;">113....</div>
<div class="b" style="left:4px;top:514.69px;width:152px;height:1px;background:#dde5dd;"></div>
<svg class="abs" style="left:7.2px;top:500.9px" width="11" height="10" viewBox="0 0 11 10"><path d="M5.500 9.200 L9.900 5 H7.500 V1.700 Q5.500 0.700 3.500 1.700 V5 H1.100 Z" fill="#f87048" stroke="#c84020" stroke-width="0.900"/></svg>
<div class="t" style="top:498.3px;font-size:11.4px;color:#222;left:22.5px;transform:scaleX(0.793);transform-origin:0 50%;">EUR...</div>
<div class="t" style="top:498.3px;font-size:11.4px;color:#e03a30;right:1171.6px;transform:scaleX(0.862);transform-origin:100% 50%;">1.47...</div>
<div class="t" style="top:498.3px;font-size:11.4px;color:#e03a30;right:1128.1px;transform:scaleX(0.862);transform-origin:100% 50%;">1.47...</div>
<div class="b" style="left:4px;top:533.4px;width:152px;height:1px;background:#dde5dd;"></div>
<svg class="abs" style="left:7.2px;top:519.6px" width="11" height="10" viewBox="0 0 11 10"><path d="M5.500 9.200 L9.900 5 H7.500 V1.700 Q5.500 0.700 3.500 1.700 V5 H1.100 Z" fill="#f87048" stroke="#c84020" stroke-width="0.900"/></svg>
<div class="t" style="top:517.0px;font-size:11.4px;color:#222;left:22.5px;transform:scaleX(0.793);transform-origin:0 50%;">EUR...</div>
<div class="t" style="top:517.0px;font-size:11.4px;color:#e03a30;right:1171.6px;transform:scaleX(0.862);transform-origin:100% 50%;">1.38...</div>
<div class="t" style="top:517.0px;font-size:11.4px;color:#e03a30;right:1128.1px;transform:scaleX(0.862);transform-origin:100% 50%;">1.38...</div>
<div class="b" style="left:68px;top:137px;width:1px;height:400px;background:#dcdcdc;"></div>
<div class="b" style="left:111.5px;top:137px;width:1px;height:400px;background:#dcdcdc;"></div>
<div class="b" style="left:156px;top:137px;width:16px;height:400px;background:#f0f0f0;"></div>
<div class="b" style="left:157px;top:153.5px;width:14px;height:320px;background:#c6c6c6;"></div>
<svg class="abs" style="left:159px;top:142px" width="10" height="7" viewBox="0 0 10 7"><path d="M1 6 L5 1.6 L9 6" fill="none" stroke="#404040" stroke-width="1.6"/></svg>
<svg class="abs" style="left:159px;top:527px" width="10" height="7" viewBox="0 0 10 7"><path d="M1 1 L5 5.4 L9 1" fill="none" stroke="#404040" stroke-width="1.6"/></svg>
<div class="b" style="left:3px;top:538px;width:170px;height:1px;background:#555;"></div>
<div class="b" style="left:5px;top:537px;width:62px;height:20px;background:#fff;border:1px solid #444;border-top:none;box-shadow:1px 1px 0 #888"></div>
<div class="t" style="top:540.0px;font-size:11.8px;color:#222;left:14.5px;transform:scaleX(0.920);transform-origin:0 50%;">Symbols</div>
<div class="t" style="top:540.0px;font-size:11.8px;color:#707070;left:76.0px;transform:scaleX(0.920);transform-origin:0 50%;">Tick Chart</div>
<div class="b" style="left:136px;top:541px;width:1px;height:13px;background:#555;"></div>
<svg width="1104" height="421" viewBox="176 121 1104 421" style="position:absolute;left:176px;top:121px" font-family="'Liberation Sans',sans-serif">
<rect x="176" y="121" width="1104" height="421" fill="#000"/>
<defs><clipPath id="mc"><rect x="180" y="125" width="1059" height="263"/></clipPath></defs>
<g clip-path="url(#mc)">
<polygon points="180.0,91.8 200.0,93.9 220.0,96.0 240.0,98.1 260.0,100.2 280.0,102.4 300.0,104.6 320.0,106.8 340.0,109.1 360.0,111.3 380.0,113.6 400.0,116.0 420.0,118.3 440.0,120.7 460.0,123.1 480.0,125.5 500.0,128.0 520.0,130.5 540.0,133.0 560.0,135.6 580.0,138.2 600.0,140.9 620.0,143.5 640.0,146.2 660.0,149.0 680.0,151.8 700.0,154.6 720.0,157.5 740.0,160.4 760.0,163.3 780.0,166.3 800.0,169.3 820.0,172.4 840.0,175.5 860.0,178.7 880.0,181.9 900.0,185.2 920.0,188.5 940.0,191.9 960.0,195.3 980.0,198.7 1000.0,202.2 1020.0,205.8 1040.0,209.4 1060.0,213.1 1080.0,216.8 1100.0,220.6 1120.0,224.4 1140.0,228.3 1160.0,232.2 1180.0,236.2 1200.0,240.3 1220.0,244.4 1239.0,248.4 1239.0,281.4 1220.0,277.4 1200.0,273.3 1180.0,269.2 1160.0,265.2 1140.0,261.3 1120.0,257.4 1100.0,253.6 1080.0,249.8 1060.0,246.1 1040.0,242.4 1020.0,238.8 1000.0,235.2 980.0,231.7 960.0,228.3 940.0,224.9 920.0,221.5 900.0,218.2 880.0,214.9 860.0,211.7 840.0,208.5 820.0,205.4 800.0,202.3 780.0,199.3 760.0,196.3 740.0,193.4 720.0,190.5 700.0,187.6 680.0,184.8 660.0,182.0 640.0,179.2 620.0,176.5 600.0,173.9 580.0,171.2 560.0,168.6 540.0,166.0 520.0,163.5 500.0,161.0 480.0,158.5 460.0,156.1 440.0,153.7 420.0,151.3 400.0,149.0 380.0,146.6 360.0,144.3 340.0,142.1 320.0,139.8 300.0,137.6 280.0,135.4 260.0,133.2 240.0,131.1 220.0,129.0 200.0,126.9 180.0,124.8" fill="#320000"/>
<polygon points="180.0,228.8 200.0,230.9 220.0,233.0 240.0,235.1 260.0,237.2 280.0,239.4 300.0,241.6 320.0,243.8 340.0,246.1 360.0,248.3 380.0,250.6 400.0,253.0 420.0,255.3 440.0,257.7 460.0,260.1 480.0,262.5 500.0,265.0 520.0,267.5 540.0,270.0 560.0,272.6 580.0,275.2 600.0,277.9 620.0,280.5 640.0,283.2 660.0,286.0 680.0,288.8 700.0,291.6 720.0,294.5 740.0,297.4 760.0,300.3 780.0,303.3 800.0,306.3 820.0,309.4 840.0,312.5 860.0,315.7 880.0,318.9 900.0,322.2 920.0,325.5 940.0,328.9 960.0,332.3 980.0,335.7 1000.0,339.2 1020.0,342.8 1040.0,346.4 1060.0,350.1 1080.0,353.8 1100.0,357.6 1120.0,361.4 1140.0,365.3 1160.0,369.2 1180.0,373.2 1200.0,377.3 1220.0,381.4 1239.0,385.4 1239.0,418.4 1220.0,414.4 1200.0,410.3 1180.0,406.2 1160.0,402.2 1140.0,398.3 1120.0,394.4 1100.0,390.6 1080.0,386.8 1060.0,383.1 1040.0,379.4 1020.0,375.8 1000.0,372.2 980.0,368.7 960.0,365.3 940.0,361.9 920.0,358.5 900.0,355.2 880.0,351.9 860.0,348.7 840.0,345.5 820.0,342.4 800.0,339.3 780.0,336.3 760.0,333.3 740.0,330.4 720.0,327.5 700.0,324.6 680.0,321.8 660.0,319.0 640.0,316.2 620.0,313.5 600.0,310.9 580.0,308.2 560.0,305.6 540.0,303.0 520.0,300.5 500.0,298.0 480.0,295.5 460.0,293.1 440.0,290.7 420.0,288.3 400.0,286.0 380.0,283.6 360.0,281.3 340.0,279.1 320.0,276.8 300.0,274.6 280.0,272.4 260.0,270.2 240.0,268.1 220.0,266.0 200.0,263.9 180.0,261.8" fill="#320000"/>
<polygon points="180.0,124.8 200.0,126.9 220.0,129.0 240.0,131.1 260.0,133.2 280.0,135.4 300.0,137.6 320.0,139.8 340.0,142.1 360.0,144.3 380.0,146.6 400.0,149.0 420.0,151.3 440.0,153.7 460.0,156.1 480.0,158.5 500.0,161.0 520.0,163.5 540.0,166.0 560.0,168.6 580.0,171.2 600.0,173.9 620.0,176.5 640.0,179.2 660.0,182.0 680.0,184.8 700.0,187.6 720.0,190.5 740.0,193.4 760.0,196.3 780.0,199.3 800.0,202.3 820.0,205.4 840.0,208.5 860.0,211.7 880.0,214.9 900.0,218.2 920.0,221.5 940.0,224.9 960.0,228.3 980.0,231.7 1000.0,235.2 1020.0,238.8 1040.0,242.4 1060.0,246.1 1080.0,249.8 1100.0,253.6 1120.0,257.4 1140.0,261.3 1160.0,265.2 1180.0,269.2 1200.0,273.3 1220.0,277.4 1239.0,281.4 1239.0,292.4 1220.0,288.4 1200.0,284.3 1180.0,280.2 1160.0,276.2 1140.0,272.3 1120.0,268.4 1100.0,264.6 1080.0,260.8 1060.0,257.1 1040.0,253.4 1020.0,249.8 1000.0,246.2 980.0,242.7 960.0,239.3 940.0,235.9 920.0,232.5 900.0,229.2 880.0,225.9 860.0,222.7 840.0,219.5 820.0,216.4 800.0,213.3 780.0,210.3 760.0,207.3 740.0,204.4 720.0,201.5 700.0,198.6 680.0,195.8 660.0,193.0 640.0,190.2 620.0,187.5 600.0,184.9 580.0,182.2 560.0,179.6 540.0,177.0 520.0,174.5 500.0,172.0 480.0,169.5 460.0,167.1 440.0,164.7 420.0,162.3 400.0,160.0 380.0,157.6 360.0,155.3 340.0,153.1 320.0,150.8 300.0,148.6 280.0,146.4 260.0,144.2 240.0,142.1 220.0,140.0 200.0,137.9 180.0,135.8" fill="#000042"/>
<polygon points="180.0,217.8 200.0,219.9 220.0,222.0 240.0,224.1 260.0,226.2 280.0,228.4 300.0,230.6 320.0,232.8 340.0,235.1 360.0,237.3 380.0,239.6 400.0,242.0 420.0,244.3 440.0,246.7 460.0,249.1 480.0,251.5 500.0,254.0 520.0,256.5 540.0,259.0 560.0,261.6 580.0,264.2 600.0,266.9 620.0,269.5 640.0,272.2 660.0,275.0 680.0,277.8 700.0,280.6 720.0,283.5 740.0,286.4 760.0,289.3 780.0,292.3 800.0,295.3 820.0,298.4 840.0,301.5 860.0,304.7 880.0,307.9 900.0,311.2 920.0,314.5 940.0,317.9 960.0,321.3 980.0,324.7 1000.0,328.2 1020.0,331.8 1040.0,335.4 1060.0,339.1 1080.0,342.8 1100.0,346.6 1120.0,350.4 1140.0,354.3 1160.0,358.2 1180.0,362.2 1200.0,366.3 1220.0,370.4 1239.0,374.4 1239.0,385.4 1220.0,381.4 1200.0,377.3 1180.0,373.2 1160.0,369.2 1140.0,365.3 1120.0,361.4 1100.0,357.6 1080.0,353.8 1060.0,350.1 1040.0,346.4 1020.0,342.8 1000.0,339.2 980.0,335.7 960.0,332.3 940.0,328.9 920.0,325.5 900.0,322.2 880.0,318.9 860.0,315.7 840.0,312.5 820.0,309.4 800.0,306.3 780.0,303.3 760.0,300.3 740.0,297.4 720.0,294.5 700.0,291.6 680.0,288.8 660.0,286.0 640.0,283.2 620.0,280.5 600.0,277.9 580.0,275.2 560.0,272.6 540.0,270.0 520.0,267.5 500.0,265.0 480.0,262.5 460.0,260.1 440.0,257.7 420.0,255.3 400.0,253.0 380.0,250.6 360.0,248.3 340.0,246.1 320.0,243.8 300.0,241.6 280.0,239.4 260.0,237.2 240.0,235.1 220.0,233.0 200.0,230.9 180.0,228.8" fill="#000042"/>
<line x1="180.5" y1="261.8" x2="193.5" y2="230.2" stroke="#1c0000" stroke-width="0.9" opacity="0.75"/>
<line x1="195.5" y1="263.4" x2="208.5" y2="231.8" stroke="#1c0000" stroke-width="0.9" opacity="0.75"/>
<line x1="210.5" y1="265.0" x2="223.5" y2="233.3" stroke="#1c0000" stroke-width="0.9" opacity="0.75"/>
<line x1="225.5" y1="266.6" x2="238.5" y2="234.9" stroke="#1c0000" stroke-width="0.9" opacity="0.75"/>
<line x1="240.5" y1="268.2" x2="253.5" y2="236.5" stroke="#1c0000" stroke-width="0.9" opacity="0.75"/>
<line x1="255.5" y1="269.8" x2="268.5" y2="238.2" stroke="#1c0000" stroke-width="0.9" opacity="0.75"/>
<line x1="270.5" y1="271.4" x2="283.5" y2="239.8" stroke="#1c0000" stroke-width="0.9" opacity="0.75"/>
<line x1="285.5" y1="273.0" x2="298.5" y2="241.4" stroke="#1c0000" stroke-width="0.9" opacity="0.75"/>
<line x1="300.5" y1="274.7" x2="313.5" y2="243.1" stroke="#1c0000" stroke-width="0.9" opacity="0.75"/>
<line x1="315.5" y1="276.3" x2="328.5" y2="244.8" stroke="#1c0000" stroke-width="0.9" opacity="0.75"/>
<line x1="330.5" y1="278.0" x2="343.5" y2="246.5" stroke="#1c0000" stroke-width="0.9" opacity="0.75"/>
<line x1="345.5" y1="279.7" x2="358.5" y2="248.2" stroke="#1c0000" stroke-width="0.9" opacity="0.75"/>
<line x1="360.5" y1="281.4" x2="373.5" y2="249.9" stroke="#1c0000" stroke-width="0.9" opacity="0.75"/>
<line x1="375.5" y1="283.1" x2="388.5" y2="251.6" stroke="#1c0000" stroke-width="0.9" opacity="0.75"/>
<line x1="390.5" y1="284.8" x2="403.5" y2="253.4" stroke="#1c0000" stroke-width="0.9" opacity="0.75"/>
<line x1="405.5" y1="286.6" x2="418.5" y2="255.1" stroke="#1c0000" stroke-width="0.9" opacity="0.75"/>
<line x1="420.5" y1="288.4" x2="433.5" y2="256.9" stroke="#1c0000" stroke-width="0.9" opacity="0.75"/>
<line x1="435.5" y1="290.1" x2="448.5" y2="258.7" stroke="#1c0000" stroke-width="0.9" opacity="0.75"/>
<line x1="450.5" y1="291.9" x2="463.5" y2="260.5" stroke="#1c0000" stroke-width="0.9" opacity="0.75"/>
<line x1="465.5" y1="293.8" x2="478.5" y2="262.3" stroke="#1c0000" stroke-width="0.9" opacity="0.75"/>
<line x1="480.5" y1="295.6" x2="493.5" y2="264.2" stroke="#1c0000" stroke-width="0.9" opacity="0.75"/>
<line x1="495.5" y1="297.4" x2="508.5" y2="266.1" stroke="#1c0000" stroke-width="0.9" opacity="0.75"/>
<line x1="510.5" y1="299.3" x2="523.5" y2="267.9" stroke="#1c0000" stroke-width="0.9" opacity="0.75"/>
<line x1="525.5" y1="301.2" x2="538.5" y2="269.8" stroke="#1c0000" stroke-width="0.9" opacity="0.75"/>
<line x1="540.5" y1="303.1" x2="553.5" y2="271.8" stroke="#1c0000" stroke-width="0.9" opacity="0.75"/>
<line x1="555.5" y1="305.0" x2="568.5" y2="273.7" stroke="#1c0000" stroke-width="0.9" opacity="0.75"/>
<line x1="570.5" y1="307.0" x2="583.5" y2="275.7" stroke="#1c0000" stroke-width="0.9" opacity="0.75"/>
<line x1="585.5" y1="308.9" x2="598.5" y2="277.7" stroke="#1c0000" stroke-width="0.9" opacity="0.75"/>
<line x1="600.5" y1="310.9" x2="613.5" y2="279.7" stroke="#1c0000" stroke-width="0.9" opacity="0.75"/>
<line x1="615.5" y1="312.9" x2="628.5" y2="281.7" stroke="#1c0000" stroke-width="0.9" opacity="0.75"/>
<line x1="630.5" y1="314.9" x2="643.5" y2="283.7" stroke="#1c0000" stroke-width="0.9" opacity="0.75"/>
<line x1="645.5" y1="317.0" x2="658.5" y2="285.8" stroke="#1c0000" stroke-width="0.9" opacity="0.75"/>
<line x1="660.5" y1="319.1" x2="673.5" y2="287.9" stroke="#1c0000" stroke-width="0.9" opacity="0.75"/>
<line x1="675.5" y1="321.1" x2="688.5" y2="290.0" stroke="#1c0000" stroke-width="0.9" opacity="0.75"/>
<line x1="690.5" y1="323.3" x2="703.5" y2="292.1" stroke="#1c0000" stroke-width="0.9" opacity="0.75"/>
<line x1="705.5" y1="325.4" x2="718.5" y2="294.2" stroke="#1c0000" stroke-width="0.9" opacity="0.75"/>
<line x1="720.5" y1="327.5" x2="733.5" y2="296.4" stroke="#1c0000" stroke-width="0.9" opacity="0.75"/>
<line x1="735.5" y1="329.7" x2="748.5" y2="298.6" stroke="#1c0000" stroke-width="0.9" opacity="0.75"/>
<line x1="750.5" y1="331.9" x2="763.5" y2="300.8" stroke="#1c0000" stroke-width="0.9" opacity="0.75"/>
<line x1="765.5" y1="334.1" x2="778.5" y2="303.1" stroke="#1c0000" stroke-width="0.9" opacity="0.75"/>
<line x1="780.5" y1="336.4" x2="793.5" y2="305.4" stroke="#1c0000" stroke-width="0.9" opacity="0.75"/>
<line x1="795.5" y1="338.7" x2="808.5" y2="307.6" stroke="#1c0000" stroke-width="0.9" opacity="0.75"/>
<line x1="810.5" y1="341.0" x2="823.5" y2="310.0" stroke="#1c0000" stroke-width="0.9" opacity="0.75"/>
<line x1="825.5" y1="343.3" x2="838.5" y2="312.3" stroke="#1c0000" stroke-width="0.9" opacity="0.75"/>
<line x1="840.5" y1="345.6" x2="853.5" y2="314.7" stroke="#1c0000" stroke-width="0.9" opacity="0.75"/>
<line x1="855.5" y1="348.0" x2="868.5" y2="317.1" stroke="#1c0000" stroke-width="0.9" opacity="0.75"/>
<line x1="870.5" y1="350.4" x2="883.5" y2="319.5" stroke="#1c0000" stroke-width="0.9" opacity="0.75"/>
<line x1="885.5" y1="352.8" x2="898.5" y2="321.9" stroke="#1c0000" stroke-width="0.9" opacity="0.75"/>
<line x1="900.5" y1="355.3" x2="913.5" y2="324.4" stroke="#1c0000" stroke-width="0.9" opacity="0.75"/>
<line x1="915.5" y1="357.7" x2="928.5" y2="326.9" stroke="#1c0000" stroke-width="0.9" opacity="0.75"/>
<line x1="930.5" y1="360.3" x2="943.5" y2="329.4" stroke="#1c0000" stroke-width="0.9" opacity="0.75"/>
<line x1="945.5" y1="362.8" x2="958.5" y2="332.0" stroke="#1c0000" stroke-width="0.9" opacity="0.75"/>
<line x1="960.5" y1="365.3" x2="973.5" y2="334.6" stroke="#1c0000" stroke-width="0.9" opacity="0.75"/>
<line x1="975.5" y1="367.9" x2="988.5" y2="337.2" stroke="#1c0000" stroke-width="0.9" opacity="0.75"/>
<line x1="990.5" y1="370.6" x2="1003.5" y2="339.8" stroke="#1c0000" stroke-width="0.9" opacity="0.75"/>
<line x1="1005.5" y1="373.2" x2="1018.5" y2="342.5" stroke="#1c0000" stroke-width="0.9" opacity="0.75"/>
<line x1="1020.5" y1="375.9" x2="1033.5" y2="345.2" stroke="#1c0000" stroke-width="0.9" opacity="0.75"/>
<line x1="1035.5" y1="378.6" x2="1048.5" y2="348.0" stroke="#1c0000" stroke-width="0.9" opacity="0.75"/>
<line x1="1050.5" y1="381.3" x2="1063.5" y2="350.7" stroke="#1c0000" stroke-width="0.9" opacity="0.75"/>
<line x1="1065.5" y1="384.1" x2="1078.5" y2="353.5" stroke="#1c0000" stroke-width="0.9" opacity="0.75"/>
<line x1="1080.5" y1="386.9" x2="1093.5" y2="356.3" stroke="#1c0000" stroke-width="0.9" opacity="0.75"/>
<line x1="1095.5" y1="389.7" x2="1108.5" y2="359.2" stroke="#1c0000" stroke-width="0.9" opacity="0.75"/>
<line x1="1110.5" y1="392.6" x2="1123.5" y2="362.1" stroke="#1c0000" stroke-width="0.9" opacity="0.75"/>
<line x1="1125.5" y1="395.5" x2="1138.5" y2="365.0" stroke="#1c0000" stroke-width="0.9" opacity="0.75"/>
<line x1="1140.5" y1="398.4" x2="1153.5" y2="367.9" stroke="#1c0000" stroke-width="0.9" opacity="0.75"/>
<line x1="1155.5" y1="401.3" x2="1168.5" y2="370.9" stroke="#1c0000" stroke-width="0.9" opacity="0.75"/>
<line x1="1170.5" y1="404.3" x2="1183.5" y2="373.9" stroke="#1c0000" stroke-width="0.9" opacity="0.75"/>
<line x1="1185.5" y1="407.3" x2="1198.5" y2="377.0" stroke="#1c0000" stroke-width="0.9" opacity="0.75"/>
<line x1="1200.5" y1="410.4" x2="1213.5" y2="380.1" stroke="#1c0000" stroke-width="0.9" opacity="0.75"/>
<line x1="1215.5" y1="413.5" x2="1228.5" y2="383.2" stroke="#1c0000" stroke-width="0.9" opacity="0.75"/>
<line x1="1230.5" y1="416.6" x2="1243.5" y2="386.3" stroke="#1c0000" stroke-width="0.9" opacity="0.75"/>
<line x1="1245.5" y1="419.8" x2="1258.5" y2="389.5" stroke="#1c0000" stroke-width="0.9" opacity="0.75"/>
<line x1="180.5" y1="176.0" x2="180.5" y2="184.0" stroke="#00e000" stroke-width="1.3"/>
<rect x="175.5" y="177.0" width="10" height="6.0" fill="#000" stroke="#00e000" stroke-width="1.3"/>
<line x1="195.5" y1="172.0" x2="195.5" y2="199.0" stroke="#00e000" stroke-width="1.3"/>
<rect x="190.5" y="176.0" width="10" height="19.5" fill="#000" stroke="#00e000" stroke-width="1.3"/>
<line x1="225.5" y1="170.0" x2="225.5" y2="208.0" stroke="#00e000" stroke-width="1.3"/>
<rect x="220.5" y="172.0" width="10" height="36.0" fill="#fff" stroke="#00e000" stroke-width="1.3"/>
<line x1="240.5" y1="203.3" x2="240.5" y2="221.0" stroke="#00e000" stroke-width="1.3"/>
<rect x="235.5" y="203.3" width="10" height="5.6" fill="#000" stroke="#00e000" stroke-width="1.3"/>
<line x1="255.5" y1="195.5" x2="255.5" y2="207.8" stroke="#00e000" stroke-width="1.3"/>
<rect x="250.0" y="203.6" width="11" height="1.6" fill="#00e000"/>
<line x1="270.5" y1="203.3" x2="270.5" y2="215.5" stroke="#00e000" stroke-width="1.3"/>
<rect x="265.5" y="205.5" width="10" height="7.8" fill="#fff" stroke="#00e000" stroke-width="1.3"/>
<line x1="285.5" y1="203.3" x2="285.5" y2="217.8" stroke="#00e000" stroke-width="1.3"/>
<rect x="280.5" y="208.9" width="10" height="4.4" fill="#000" stroke="#00e000" stroke-width="1.3"/>
<line x1="300.5" y1="200.0" x2="300.5" y2="211.0" stroke="#00e000" stroke-width="1.3"/>
<rect x="295.5" y="202.2" width="10" height="6.7" fill="#000" stroke="#00e000" stroke-width="1.3"/>
<line x1="315.5" y1="180.0" x2="315.5" y2="202.2" stroke="#00e000" stroke-width="1.3"/>
<rect x="310.5" y="182.0" width="10" height="20.2" fill="#000" stroke="#00e000" stroke-width="1.3"/>
<line x1="375.5" y1="152.2" x2="375.5" y2="176.7" stroke="#00e000" stroke-width="1.3"/>
<rect x="370.5" y="156.7" width="10" height="20.0" fill="#fff" stroke="#00e000" stroke-width="1.3"/>
<line x1="390.5" y1="158.9" x2="390.5" y2="181.8" stroke="#00e000" stroke-width="1.3"/>
<rect x="385.5" y="170.7" width="10" height="5.3" fill="#000" stroke="#00e000" stroke-width="1.3"/>
<line x1="405.5" y1="158.2" x2="405.5" y2="178.9" stroke="#00e000" stroke-width="1.3"/>
<rect x="400.5" y="166.7" width="10" height="4.8" fill="#000" stroke="#00e000" stroke-width="1.3"/>
<line x1="420.5" y1="158.2" x2="420.5" y2="189.3" stroke="#00e000" stroke-width="1.3"/>
<rect x="415.5" y="166.7" width="10" height="20.0" fill="#fff" stroke="#00e000" stroke-width="1.3"/>
<line x1="435.5" y1="184.4" x2="435.5" y2="205.5" stroke="#00e000" stroke-width="1.3"/>
<rect x="430.5" y="184.4" width="10" height="15.6" fill="#fff" stroke="#00e000" stroke-width="1.3"/>
<line x1="450.5" y1="197.8" x2="450.5" y2="242.2" stroke="#00e000" stroke-width="1.3"/>
<rect x="445.5" y="200.0" width="10" height="39.5" fill="#fff" stroke="#00e000" stroke-width="1.3"/>
<line x1="465.5" y1="227.8" x2="465.5" y2="256.7" stroke="#00e000" stroke-width="1.3"/>
<rect x="460.5" y="234.9" width="10" height="4.4" fill="#000" stroke="#00e000" stroke-width="1.3"/>
<line x1="480.5" y1="226.2" x2="480.5" y2="252.2" stroke="#00e000" stroke-width="1.3"/>
<rect x="475.5" y="234.4" width="10" height="3.4" fill="#fff" stroke="#00e000" stroke-width="1.3"/>
<line x1="495.5" y1="230.0" x2="495.5" y2="250.0" stroke="#00e000" stroke-width="1.3"/>
<rect x="490.5" y="237.3" width="10" height="12.7" fill="#fff" stroke="#00e000" stroke-width="1.3"/>
<line x1="510.5" y1="232.0" x2="510.5" y2="251.5" stroke="#00e000" stroke-width="1.3"/>
<rect x="505.5" y="235.0" width="10" height="15.0" fill="#000" stroke="#00e000" stroke-width="1.3"/>
<line x1="525.5" y1="231.5" x2="525.5" y2="248.4" stroke="#00e000" stroke-width="1.3"/>
<rect x="520.5" y="235.5" width="10" height="8.9" fill="#fff" stroke="#00e000" stroke-width="1.3"/>
<line x1="540.5" y1="239.0" x2="540.5" y2="251.0" stroke="#00e000" stroke-width="1.3"/>
<rect x="535.5" y="244.0" width="10" height="5.0" fill="#fff" stroke="#00e000" stroke-width="1.3"/>
<line x1="555.5" y1="244.0" x2="555.5" y2="253.3" stroke="#00e000" stroke-width="1.3"/>
<rect x="550.5" y="248.4" width="10" height="3.4" fill="#fff" stroke="#00e000" stroke-width="1.3"/>
<line x1="570.5" y1="244.4" x2="570.5" y2="255.5" stroke="#00e000" stroke-width="1.3"/>
<rect x="565.5" y="248.4" width="10" height="2.6" fill="#000" stroke="#00e000" stroke-width="1.3"/>
<line x1="585.5" y1="244.0" x2="585.5" y2="254.4" stroke="#00e000" stroke-width="1.3"/>
<rect x="580.5" y="244.0" width="10" height="5.0" fill="#000" stroke="#00e000" stroke-width="1.3"/>
<line x1="600.5" y1="226.7" x2="600.5" y2="249.3" stroke="#00e000" stroke-width="1.3"/>
<rect x="595.5" y="241.8" width="10" height="2.6" fill="#000" stroke="#00e000" stroke-width="1.3"/>
<line x1="615.5" y1="231.5" x2="615.5" y2="249.0" stroke="#00e000" stroke-width="1.3"/>
<rect x="610.5" y="241.0" width="10" height="8.0" fill="#fff" stroke="#00e000" stroke-width="1.3"/>
<line x1="630.5" y1="245.0" x2="630.5" y2="257.8" stroke="#00e000" stroke-width="1.3"/>
<rect x="625.5" y="245.5" width="10" height="3.8" fill="#000" stroke="#00e000" stroke-width="1.3"/>
<line x1="645.5" y1="234.4" x2="645.5" y2="245.5" stroke="#00e000" stroke-width="1.3"/>
<rect x="640.5" y="234.4" width="10" height="11.1" fill="#000" stroke="#00e000" stroke-width="1.3"/>
<line x1="660.5" y1="220.0" x2="660.5" y2="235.5" stroke="#00e000" stroke-width="1.3"/>
<rect x="655.5" y="222.7" width="10" height="11.7" fill="#000" stroke="#00e000" stroke-width="1.3"/>
<line x1="675.5" y1="202.5" x2="675.5" y2="225.5" stroke="#00e000" stroke-width="1.3"/>
<rect x="670.5" y="206.2" width="10" height="16.7" fill="#000" stroke="#00e000" stroke-width="1.3"/>
<line x1="690.5" y1="199.0" x2="690.5" y2="216.7" stroke="#00e000" stroke-width="1.3"/>
<rect x="685.5" y="203.2" width="10" height="3.3" fill="#000" stroke="#00e000" stroke-width="1.3"/>
<line x1="705.5" y1="201.0" x2="705.5" y2="230.0" stroke="#00e000" stroke-width="1.3"/>
<rect x="700.5" y="202.5" width="10" height="27.5" fill="#fff" stroke="#00e000" stroke-width="1.3"/>
<line x1="720.5" y1="182.4" x2="720.5" y2="231.0" stroke="#00e000" stroke-width="1.3"/>
<rect x="715.5" y="185.5" width="10" height="44.8" fill="#000" stroke="#00e000" stroke-width="1.3"/>
<line x1="735.5" y1="184.5" x2="735.5" y2="217.0" stroke="#00e000" stroke-width="1.3"/>
<rect x="730.5" y="185.1" width="10" height="26.4" fill="#fff" stroke="#00e000" stroke-width="1.3"/>
<line x1="750.5" y1="204.0" x2="750.5" y2="227.8" stroke="#00e000" stroke-width="1.3"/>
<rect x="745.0" y="209.9" width="11" height="1.6" fill="#00e000"/>
<line x1="765.5" y1="184.4" x2="765.5" y2="214.3" stroke="#00e000" stroke-width="1.3"/>
<rect x="760.5" y="191.4" width="10" height="19.1" fill="#000" stroke="#00e000" stroke-width="1.3"/>
<line x1="780.5" y1="187.2" x2="780.5" y2="205.3" stroke="#00e000" stroke-width="1.3"/>
<rect x="775.5" y="191.4" width="10" height="11.8" fill="#fff" stroke="#00e000" stroke-width="1.3"/>
<line x1="795.5" y1="197.0" x2="795.5" y2="222.6" stroke="#00e000" stroke-width="1.3"/>
<rect x="790.5" y="202.5" width="10" height="16.7" fill="#fff" stroke="#00e000" stroke-width="1.3"/>
<line x1="810.5" y1="218.0" x2="810.5" y2="238.9" stroke="#00e000" stroke-width="1.3"/>
<rect x="805.5" y="218.9" width="10" height="6.0" fill="#fff" stroke="#00e000" stroke-width="1.3"/>
<line x1="825.5" y1="218.9" x2="825.5" y2="310.0" stroke="#00e000" stroke-width="1.3"/>
<rect x="820.5" y="225.5" width="10" height="81.5" fill="#fff" stroke="#00e000" stroke-width="1.3"/>
<line x1="840.5" y1="276.0" x2="840.5" y2="311.0" stroke="#00e000" stroke-width="1.3"/>
<rect x="835.5" y="283.3" width="10" height="23.4" fill="#000" stroke="#00e000" stroke-width="1.3"/>
<line x1="855.5" y1="282.0" x2="855.5" y2="306.0" stroke="#00e000" stroke-width="1.3"/>
<rect x="850.5" y="283.3" width="10" height="20.7" fill="#fff" stroke="#00e000" stroke-width="1.3"/>
<line x1="870.5" y1="288.4" x2="870.5" y2="310.0" stroke="#00e000" stroke-width="1.3"/>
<rect x="865.5" y="296.0" width="10" height="8.4" fill="#000" stroke="#00e000" stroke-width="1.3"/>
<line x1="885.5" y1="284.4" x2="885.5" y2="299.6" stroke="#00e000" stroke-width="1.3"/>
<rect x="880.5" y="288.9" width="10" height="7.1" fill="#000" stroke="#00e000" stroke-width="1.3"/>
<line x1="900.5" y1="285.0" x2="900.5" y2="295.0" stroke="#00e000" stroke-width="1.3"/>
<rect x="895.5" y="285.5" width="10" height="3.8" fill="#000" stroke="#00e000" stroke-width="1.3"/>
<line x1="915.5" y1="277.8" x2="915.5" y2="288.9" stroke="#00e000" stroke-width="1.3"/>
<rect x="910.0" y="284.1" width="11" height="1.6" fill="#00e000"/>
<line x1="930.5" y1="276.7" x2="930.5" y2="288.4" stroke="#00e000" stroke-width="1.3"/>
<rect x="925.0" y="282.5" width="11" height="1.6" fill="#00e000"/>
<line x1="945.5" y1="277.8" x2="945.5" y2="287.8" stroke="#00e000" stroke-width="1.3"/>
<rect x="940.5" y="280.4" width="10" height="2.9" fill="#000" stroke="#00e000" stroke-width="1.3"/>
<line x1="960.5" y1="279.5" x2="960.5" y2="297.3" stroke="#00e000" stroke-width="1.3"/>
<rect x="955.5" y="280.4" width="10" height="16.9" fill="#fff" stroke="#00e000" stroke-width="1.3"/>
<line x1="975.5" y1="286.5" x2="975.5" y2="304.4" stroke="#00e000" stroke-width="1.3"/>
<rect x="970.5" y="288.9" width="10" height="8.4" fill="#000" stroke="#00e000" stroke-width="1.3"/>
<line x1="990.5" y1="284.4" x2="990.5" y2="298.9" stroke="#00e000" stroke-width="1.3"/>
<rect x="985.5" y="286.2" width="10" height="3.1" fill="#000" stroke="#00e000" stroke-width="1.3"/>
<line x1="1005.5" y1="270.5" x2="1005.5" y2="288.0" stroke="#00e000" stroke-width="1.3"/>
<rect x="1000.5" y="271.0" width="10" height="16.8" fill="#000" stroke="#00e000" stroke-width="1.3"/>
<line x1="1020.5" y1="266.7" x2="1020.5" y2="285.5" stroke="#00e000" stroke-width="1.3"/>
<rect x="1015.5" y="271.0" width="10" height="13.0" fill="#fff" stroke="#00e000" stroke-width="1.3"/>
<line x1="1035.5" y1="273.8" x2="1035.5" y2="284.4" stroke="#00e000" stroke-width="1.3"/>
<rect x="1030.5" y="279.5" width="10" height="3.8" fill="#000" stroke="#00e000" stroke-width="1.3"/>
<line x1="1050.5" y1="272.9" x2="1050.5" y2="284.4" stroke="#00e000" stroke-width="1.3"/>
<rect x="1045.5" y="276.7" width="10" height="3.3" fill="#000" stroke="#00e000" stroke-width="1.3"/>
<line x1="1065.5" y1="276.5" x2="1065.5" y2="296.7" stroke="#00e000" stroke-width="1.3"/>
<rect x="1060.5" y="277.8" width="10" height="10.4" fill="#fff" stroke="#00e000" stroke-width="1.3"/>
<line x1="1080.5" y1="287.0" x2="1080.5" y2="326.2" stroke="#00e000" stroke-width="1.3"/>
<rect x="1075.5" y="287.8" width="10" height="21.1" fill="#fff" stroke="#00e000" stroke-width="1.3"/>
<line x1="1095.5" y1="308.0" x2="1095.5" y2="335.5" stroke="#00e000" stroke-width="1.3"/>
<rect x="1090.5" y="308.4" width="10" height="12.6" fill="#fff" stroke="#00e000" stroke-width="1.3"/>
<line x1="1110.5" y1="316.0" x2="1110.5" y2="344.0" stroke="#00e000" stroke-width="1.3"/>
<rect x="1105.5" y="321.0" width="10" height="4.5" fill="#fff" stroke="#00e000" stroke-width="1.3"/>
<line x1="1125.5" y1="311.0" x2="1125.5" y2="334.4" stroke="#00e000" stroke-width="1.3"/>
<rect x="1120.5" y="318.9" width="10" height="6.6" fill="#000" stroke="#00e000" stroke-width="1.3"/>
<line x1="1140.5" y1="311.5" x2="1140.5" y2="330.7" stroke="#00e000" stroke-width="1.3"/>
<rect x="1135.5" y="318.9" width="10" height="6.6" fill="#fff" stroke="#00e000" stroke-width="1.3"/>
<line x1="1155.5" y1="316.7" x2="1155.5" y2="382.2" stroke="#00e000" stroke-width="1.3"/>
<rect x="1150.5" y="324.4" width="10" height="34.5" fill="#fff" stroke="#00e000" stroke-width="1.3"/>
<line x1="1170.5" y1="304.9" x2="1170.5" y2="364.4" stroke="#00e000" stroke-width="1.3"/>
<rect x="1165.5" y="311.5" width="10" height="47.4" fill="#000" stroke="#00e000" stroke-width="1.3"/>
<line x1="1185.5" y1="277.8" x2="1185.5" y2="312.5" stroke="#00e000" stroke-width="1.3"/>
<rect x="1180.5" y="290.0" width="10" height="22.2" fill="#000" stroke="#00e000" stroke-width="1.3"/>
<line x1="1200.5" y1="286.2" x2="1200.5" y2="291.8" stroke="#00e000" stroke-width="1.3"/>
<rect x="1195.0" y="288.4" width="11" height="1.6" fill="#00e000"/>
<polyline points="180.0,91.8 200.0,93.9 220.0,96.0 240.0,98.1 260.0,100.2 280.0,102.4 300.0,104.6 320.0,106.8 340.0,109.1 360.0,111.3 380.0,113.6 400.0,116.0 420.0,118.3 440.0,120.7 460.0,123.1 480.0,125.5 500.0,128.0 520.0,130.5 540.0,133.0 560.0,135.6 580.0,138.2 600.0,140.9 620.0,143.5 640.0,146.2 660.0,149.0 680.0,151.8 700.0,154.6 720.0,157.5 740.0,160.4 760.0,163.3 780.0,166.3 800.0,169.3 820.0,172.4 840.0,175.5 860.0,178.7 880.0,181.9 900.0,185.2 920.0,188.5 940.0,191.9 960.0,195.3 980.0,198.7 1000.0,202.2 1020.0,205.8 1040.0,209.4 1060.0,213.1 1080.0,216.8 1100.0,220.6 1120.0,224.4 1140.0,228.3 1160.0,232.2 1180.0,236.2 1200.0,240.3 1220.0,244.4 1239.0,248.4" fill="none" stroke="#9c1024" stroke-width="1.05"/>
<polyline points="180.0,261.8 200.0,263.9 220.0,266.0 240.0,268.1 260.0,270.2 280.0,272.4 300.0,274.6 320.0,276.8 340.0,279.1 360.0,281.3 380.0,283.6 400.0,286.0 420.0,288.3 440.0,290.7 460.0,293.1 480.0,295.5 500.0,298.0 520.0,300.5 540.0,303.0 560.0,305.6 580.0,308.2 600.0,310.9 620.0,313.5 640.0,316.2 660.0,319.0 680.0,321.8 700.0,324.6 720.0,327.5 740.0,330.4 760.0,333.3 780.0,336.3 800.0,339.3 820.0,342.4 840.0,345.5 860.0,348.7 880.0,351.9 900.0,355.2 920.0,358.5 940.0,361.9 960.0,365.3 980.0,368.7 1000.0,372.2 1020.0,375.8 1040.0,379.4 1060.0,383.1 1080.0,386.8 1100.0,390.6 1120.0,394.4 1140.0,398.3 1160.0,402.2 1180.0,406.2 1200.0,410.3 1220.0,414.4 1239.0,418.4" fill="none" stroke="#a81026" stroke-width="1.05"/>
<polyline points="180.0,124.8 200.0,126.9 220.0,129.0 240.0,131.1 260.0,133.2 280.0,135.4 300.0,137.6 320.0,139.8 340.0,142.1 360.0,144.3 380.0,146.6 400.0,149.0 420.0,151.3 440.0,153.7 460.0,156.1 480.0,158.5 500.0,161.0 520.0,163.5 540.0,166.0 560.0,168.6 580.0,171.2 600.0,173.9 620.0,176.5 640.0,179.2 660.0,182.0 680.0,184.8 700.0,187.6 720.0,190.5 740.0,193.4 760.0,196.3 780.0,199.3 800.0,202.3 820.0,205.4 840.0,208.5 860.0,211.7 880.0,214.9 900.0,218.2 920.0,221.5 940.0,224.9 960.0,228.3 980.0,231.7 1000.0,235.2 1020.0,238.8 1040.0,242.4 1060.0,246.1 1080.0,249.8 1100.0,253.6 1120.0,257.4 1140.0,261.3 1160.0,265.2 1180.0,269.2 1200.0,273.3 1220.0,277.4 1239.0,281.4" fill="none" stroke="#bc1630" stroke-width="1.1"/>
<polyline points="180.0,228.8 200.0,230.9 220.0,233.0 240.0,235.1 260.0,237.2 280.0,239.4 300.0,241.6 320.0,243.8 340.0,246.1 360.0,248.3 380.0,250.6 400.0,253.0 420.0,255.3 440.0,257.7 460.0,260.1 480.0,262.5 500.0,265.0 520.0,267.5 540.0,270.0 560.0,272.6 580.0,275.2 600.0,277.9 620.0,280.5 640.0,283.2 660.0,286.0 680.0,288.8 700.0,291.6 720.0,294.5 740.0,297.4 760.0,300.3 780.0,303.3 800.0,306.3 820.0,309.4 840.0,312.5 860.0,315.7 880.0,318.9 900.0,322.2 920.0,325.5 940.0,328.9 960.0,332.3 980.0,335.7 1000.0,339.2 1020.0,342.8 1040.0,346.4 1060.0,350.1 1080.0,353.8 1100.0,357.6 1120.0,361.4 1140.0,365.3 1160.0,369.2 1180.0,373.2 1200.0,377.3 1220.0,381.4 1239.0,385.4" fill="none" stroke="#bc1630" stroke-width="1.1"/>
<polyline points="180.0,135.8 200.0,137.9 220.0,140.0 240.0,142.1 260.0,144.2 280.0,146.4 300.0,148.6 320.0,150.8 340.0,153.1 360.0,155.3 380.0,157.6 400.0,160.0 420.0,162.3 440.0,164.7 460.0,167.1 480.0,169.5 500.0,172.0 520.0,174.5 540.0,177.0 560.0,179.6 580.0,182.2 600.0,184.9 620.0,187.5 640.0,190.2 660.0,193.0 680.0,195.8 700.0,198.6 720.0,201.5 740.0,204.4 760.0,207.3 780.0,210.3 800.0,213.3 820.0,216.4 840.0,219.5 860.0,222.7 880.0,225.9 900.0,229.2 920.0,232.5 940.0,235.9 960.0,239.3 980.0,242.7 1000.0,246.2 1020.0,249.8 1040.0,253.4 1060.0,257.1 1080.0,260.8 1100.0,264.6 1120.0,268.4 1140.0,272.3 1160.0,276.2 1180.0,280.2 1200.0,284.3 1220.0,288.4 1239.0,292.4" fill="none" stroke="#34c4dc" stroke-width="1.2"/>
<polyline points="180.0,217.8 200.0,219.9 220.0,222.0 240.0,224.1 260.0,226.2 280.0,228.4 300.0,230.6 320.0,232.8 340.0,235.1 360.0,237.3 380.0,239.6 400.0,242.0 420.0,244.3 440.0,246.7 460.0,249.1 480.0,251.5 500.0,254.0 520.0,256.5 540.0,259.0 560.0,261.6 580.0,264.2 600.0,266.9 620.0,269.5 640.0,272.2 660.0,275.0 680.0,277.8 700.0,280.6 720.0,283.5 740.0,286.4 760.0,289.3 780.0,292.3 800.0,295.3 820.0,298.4 840.0,301.5 860.0,304.7 880.0,307.9 900.0,311.2 920.0,314.5 940.0,317.9 960.0,321.3 980.0,324.7 1000.0,328.2 1020.0,331.8 1040.0,335.4 1060.0,339.1 1080.0,342.8 1100.0,346.6 1120.0,350.4 1140.0,354.3 1160.0,358.2 1180.0,362.2 1200.0,366.3 1220.0,370.4 1239.0,374.4" fill="none" stroke="#34c4dc" stroke-width="1.2"/>
<polyline points="180.0,176.8 200.0,178.9 220.0,181.0 240.0,183.1 260.0,185.2 280.0,187.4 300.0,189.6 320.0,191.8 340.0,194.1 360.0,196.3 380.0,198.6 400.0,201.0 420.0,203.3 440.0,205.7 460.0,208.1 480.0,210.5 500.0,213.0 520.0,215.5 540.0,218.0 560.0,220.6 580.0,223.2 600.0,225.9 620.0,228.5 640.0,231.2 660.0,234.0 680.0,236.8 700.0,239.6 720.0,242.5 740.0,245.4 760.0,248.3 780.0,251.3 800.0,254.3 820.0,257.4 840.0,260.5 860.0,263.7 880.0,266.9 900.0,270.2 920.0,273.5 940.0,276.9 960.0,280.3 980.0,283.7 1000.0,287.2 1020.0,290.8 1040.0,294.4 1060.0,298.1 1080.0,301.8 1100.0,305.6 1120.0,309.4 1140.0,313.3 1160.0,317.2 1180.0,321.2 1200.0,325.3 1220.0,329.4 1239.0,333.4" fill="none" stroke="#28a4b8" stroke-width="1" stroke-dasharray="3 3" opacity="0.95"/>
<path d="M225.50 207.70 L230.00 212.83 L227.03 211.50 L227.03 217.20 L223.97 217.20 L223.97 211.50 L221.00 212.83 Z" fill="#fff"/>
<path d="M240.50 203.80 L244.80 198.94 L241.96 200.20 L241.96 194.80 L239.04 194.80 L239.04 200.20 L236.20 198.94 Z" fill="#f01818"/>
<path d="M237.5 230.0 l6 6 m0 -6 l-6 6" stroke="#28c8f0" stroke-width="1.500" fill="none"/>
<path d="M240.50 239.00 L246.25 246.02 L242.46 244.20 L242.46 252.00 L238.54 252.00 L238.54 244.20 L234.75 246.02 Z" fill="#10f010"/>
<path d="M315.50 201.60 L320.00 206.73 L317.03 205.40 L317.03 211.10 L313.97 211.10 L313.97 205.40 L311.00 206.73 Z" fill="#fff"/>
<path d="M435.50 185.50 L439.80 180.64 L436.96 181.90 L436.96 176.50 L434.04 176.50 L434.04 181.90 L431.20 180.64 Z" fill="#f01818"/>
<path d="M462.5 264.5 l6 6 m0 -6 l-6 6" stroke="#28c8f0" stroke-width="1.500" fill="none"/>
<path d="M465.50 272.00 L471.25 279.02 L467.45 277.20 L467.45 285.00 L463.55 285.00 L463.55 277.20 L459.75 279.02 Z" fill="#10f010"/>
<path d="M615.50 250.50 L620.00 255.63 L617.03 254.30 L617.03 260.00 L613.97 260.00 L613.97 254.30 L611.00 255.63 Z" fill="#fff"/>
<path d="M630.50 246.50 L634.80 241.64 L631.96 242.90 L631.96 237.50 L629.04 237.50 L629.04 242.90 L626.20 241.64 Z" fill="#f01818"/>
<path d="M627.5 265.5 l6 6 m0 -6 l-6 6" stroke="#28c8f0" stroke-width="1.500" fill="none"/>
<path d="M630.50 273.00 L636.25 280.02 L632.46 278.20 L632.46 286.00 L628.54 286.00 L628.54 278.20 L624.75 280.02 Z" fill="#10f010"/>
<path d="M645.50 241.00 L650.00 246.13 L647.03 244.80 L647.03 250.50 L643.97 250.50 L643.97 244.80 L641.00 246.13 Z" fill="#fff"/>
<path d="M720.50 165.00 L726.25 157.98 L722.46 159.80 L722.46 152.00 L718.54 152.00 L718.54 159.80 L714.75 157.98 Z" fill="#ffee00"/>
<path d="M717.7 170.0 l5.600 5.400 m0 -5.400 l-5.600 5.400" stroke="#f02020" stroke-width="1.500" fill="none"/>
<path d="M810.50 219.00 L814.80 214.14 L811.96 215.40 L811.96 210.00 L809.04 210.00 L809.04 215.40 L806.20 214.14 Z" fill="#f01818"/>
<path d="M837.5 320.0 l6 6 m0 -6 l-6 6" stroke="#28c8f0" stroke-width="1.500" fill="none"/>
<path d="M840.50 330.00 L846.25 337.02 L842.46 335.20 L842.46 343.00 L838.54 343.00 L838.54 335.20 L834.75 337.02 Z" fill="#10f010"/>
<path d="M960.50 297.50 L965.00 302.63 L962.03 301.30 L962.03 307.00 L958.97 307.00 L958.97 301.30 L956.00 302.63 Z" fill="#fff"/>
<path d="M975.50 285.50 L979.80 280.64 L976.96 281.90 L976.96 276.50 L974.04 276.50 L974.04 281.90 L971.20 280.64 Z" fill="#f01818"/>
<path d="M1005.50 285.50 L1010.00 290.63 L1007.03 289.30 L1007.03 295.00 L1003.97 295.00 L1003.97 289.30 L1001.00 290.63 Z" fill="#fff"/>
<path d="M1020.50 249.00 L1026.25 241.98 L1022.46 243.80 L1022.46 236.00 L1018.54 236.00 L1018.54 243.80 L1014.75 241.98 Z" fill="#ffee00"/>
<path d="M1017.7 253.0 l5.600 5.400 m0 -5.400 l-5.600 5.400" stroke="#f02020" stroke-width="1.500" fill="none"/>
<path d="M1080.50 290.00 L1084.80 285.14 L1081.96 286.40 L1081.96 281.00 L1079.04 281.00 L1079.04 286.40 L1076.20 285.14 Z" fill="#f01818"/>
<path d="M1185.50 310.00 L1190.00 315.13 L1187.03 313.80 L1187.03 319.50 L1183.97 319.50 L1183.97 313.80 L1181.00 315.13 Z" fill="#fff"/>
<path d="M357.7 123.0 l5.600 5.400 m0 -5.400 l-5.600 5.400" stroke="#f02020" stroke-width="1.500" fill="none"/>
</g>
<path d="M182.700 134 l3.600 -4.200 l3.600 4.200 z" fill="#fff"/>
<text x="194" y="135.800" font-size="10.6" fill="#fff" textLength="189" lengthAdjust="spacingAndGlyphs">EURUSD,H1&#160; 1.05731 1.05745 1.05722 1.05733</text>
<rect x="176" y="121" width="1104" height="0.800" fill="#f4f4f4"/>
<rect x="176" y="121" width="1" height="421" fill="#a8a8a8"/>
<rect x="177" y="122" width="0.600" height="420" fill="#444"/>
<path d="M179.600 541 V124.200 H1239.500 V522.500" fill="none" stroke="#fff" stroke-width="1"/>
<path d="M179.5 388.800 H1240 M179.5 391.500 H1240" fill="none" stroke="#fff" stroke-width="1"/>
<rect x="180" y="389.7" width="1100" height="1.2" fill="#000"/>
<path d="M179.5 522.200 H1240" fill="none" stroke="#fff" stroke-width="1.100"/>
<rect x="1278.800" y="121" width="1.200" height="421" fill="#ececec"/>
<line x1="1240" y1="139" x2="1243" y2="139" stroke="#fff"/>
<text x="1244.800" y="142.6" font-size="10.2" fill="#fff" textLength="30.800" lengthAdjust="spacingAndGlyphs">1.06575</text>
<line x1="1240" y1="170" x2="1243" y2="170" stroke="#fff"/>
<text x="1244.800" y="173.6" font-size="10.2" fill="#fff" textLength="30.800" lengthAdjust="spacingAndGlyphs">1.06400</text>
<line x1="1240" y1="201" x2="1243" y2="201" stroke="#fff"/>
<text x="1244.800" y="204.6" font-size="10.2" fill="#fff" textLength="30.800" lengthAdjust="spacingAndGlyphs">1.06225</text>
<line x1="1240" y1="232" x2="1243" y2="232" stroke="#fff"/>
<text x="1244.800" y="235.6" font-size="10.2" fill="#fff" textLength="30.800" lengthAdjust="spacingAndGlyphs">1.06050</text>
<line x1="1240" y1="263" x2="1243" y2="263" stroke="#fff"/>
<text x="1244.800" y="266.6" font-size="10.2" fill="#fff" textLength="30.800" lengthAdjust="spacingAndGlyphs">1.05880</text>
<line x1="1240" y1="325" x2="1243" y2="325" stroke="#fff"/>
<text x="1244.800" y="328.6" font-size="10.2" fill="#fff" textLength="30.800" lengthAdjust="spacingAndGlyphs">1.05530</text>
<line x1="1240" y1="356" x2="1243" y2="356" stroke="#fff"/>
<text x="1244.800" y="359.6" font-size="10.2" fill="#fff" textLength="30.800" lengthAdjust="spacingAndGlyphs">1.05355</text>
<line x1="1240" y1="386" x2="1243" y2="386" stroke="#fff"/>
<text x="1244.800" y="389.6" font-size="10.2" fill="#fff" textLength="30.800" lengthAdjust="spacingAndGlyphs">1.05185</text>
<text x="1244.800" y="297.6" font-size="10.2" fill="#fff" textLength="30.800" lengthAdjust="spacingAndGlyphs">1.05705</text>
<rect x="1240.800" y="284" width="38" height="10" fill="#fff"/>
<text x="1244.800" y="292.6" font-size="10.2" fill="#000" textLength="30.800" lengthAdjust="spacingAndGlyphs">1.05733</text>
<text x="1243" y="401.6" font-size="10.2" fill="#fff">100</text>
<text x="1243" y="435.1" font-size="10.2" fill="#fff">70</text>
<text x="1243" y="460.6" font-size="10.2" fill="#fff">50</text>
<text x="1243" y="487.1" font-size="10.2" fill="#fff">30</text>
<text x="1243" y="519.6" font-size="10.2" fill="#fff">0</text>
<line x1="180" y1="431.5" x2="1243" y2="431.5" stroke="#8c8c8c" stroke-width="1" stroke-dasharray="2.600 2"/>
<line x1="180" y1="457.0" x2="1243" y2="457.0" stroke="#8c8c8c" stroke-width="1" stroke-dasharray="2.600 2"/>
<line x1="180" y1="483.5" x2="1243" y2="483.5" stroke="#8c8c8c" stroke-width="1" stroke-dasharray="2.600 2"/>
<text x="184" y="403" font-size="9.6" fill="#fff" textLength="146" lengthAdjust="spacingAndGlyphs">Price Action Monitor 59.9388 59.9388</text>
<polyline points="180.0,448.3 194.7,456.7" fill="none" stroke="#fff" stroke-width="1.2" stroke-dasharray="3 3"/>
<polyline points="194.7,456.7 210.2,461.0 240.2,482.6 256.5,483.4 272.0,486.2 286.0,486.8" fill="none" stroke="#e8141c" stroke-width="2.2" stroke-linejoin="round"/>
<polyline points="286.0,486.8 300.0,482.0" fill="none" stroke="#fff" stroke-width="1.2" stroke-dasharray="3 3"/>
<polyline points="300.0,482.0 315.6,465.0 343.7,425.8 360.0,408.0" fill="none" stroke="#18d818" stroke-width="2.2" stroke-linejoin="round"/>
<polyline points="360.0,408.0 375.2,414.5" fill="none" stroke="#fff" stroke-width="1.2" stroke-dasharray="3 3"/>
<polyline points="375.2,414.5 390.0,423.0 405.6,429.4 421.0,439.8 436.5,463.7 449.2,487.6 466.0,504.5 481.5,510.0 495.6,515.0" fill="none" stroke="#e8141c" stroke-width="2.2" stroke-linejoin="round"/>
<polyline points="495.6,515.0 509.6,513.8" fill="none" stroke="#fff" stroke-width="1.2" stroke-dasharray="3 3"/>
<polyline points="509.6,513.8 525.6,511.5 540.2,511.5" fill="none" stroke="#18d818" stroke-width="2.2" stroke-linejoin="round"/>
<polyline points="540.2,511.5 555.2,512.1" fill="none" stroke="#fff" stroke-width="1.2" stroke-dasharray="3 3"/>
<polyline points="555.2,512.1 570.6,512.1" fill="none" stroke="#b01010" stroke-width="2.2" stroke-linejoin="round"/>
<polyline points="570.6,512.1 585.2,506.8" fill="none" stroke="#fff" stroke-width="1.2" stroke-dasharray="3 3"/>
<polyline points="585.2,506.8 600.1,473.6 615.6,457.6" fill="none" stroke="#18d818" stroke-width="2.2" stroke-linejoin="round"/>
<polyline points="615.6,457.6 631.0,458.1 645.0,448.3" fill="none" stroke="#fff" stroke-width="1.2" stroke-dasharray="3 3"/>
<polyline points="645.0,448.3 660.6,431.4 676.0,416.5 690.0,409.7" fill="none" stroke="#18d818" stroke-width="2.2" stroke-linejoin="round"/>
<polyline points="690.0,409.7 705.6,420.2" fill="none" stroke="#fff" stroke-width="1.2" stroke-dasharray="3 3"/>
<polyline points="705.6,420.2 721.0,423.8 736.0,428.6 751.0,438.4 766.0,439.8 780.0,439.8 795.6,449.7 811.0,465.1 826.0,490.5 841.0,504.5 856.0,510.1 870.0,514.9" fill="none" stroke="#e8141c" stroke-width="2.2" stroke-linejoin="round"/>
<polyline points="870.0,514.9 884.6,513.0" fill="none" stroke="#fff" stroke-width="1.2" stroke-dasharray="3 3"/>
<polyline points="884.6,513.0 901.0,507.0 919.0,491.6 946.0,467.7 960.0,467.7" fill="none" stroke="#18d818" stroke-width="2.2" stroke-linejoin="round"/>
<polyline points="960.0,467.7 976.5,469.6 990.6,467.7" fill="none" stroke="#fff" stroke-width="1.2" stroke-dasharray="3 3"/>
<polyline points="990.6,467.7 1006.0,444.0 1020.8,432.6 1035.5,426.0 1050.3,422.7" fill="none" stroke="#18d818" stroke-width="2.2" stroke-linejoin="round"/>
<polyline points="1050.3,422.7 1065.0,440.8" fill="none" stroke="#fff" stroke-width="1.2" stroke-dasharray="3 3"/>
<polyline points="1065.0,440.8 1080.5,480.1 1095.6,499.8 1111.0,509.7" fill="none" stroke="#e8141c" stroke-width="2.2" stroke-linejoin="round"/>
<polyline points="1111.0,509.7 1124.0,506.4" fill="none" stroke="#fff" stroke-width="1.2" stroke-dasharray="3 3"/>
<polyline points="1124.0,506.4 1141.5,501.5" fill="none" stroke="#18d818" stroke-width="2.2" stroke-linejoin="round"/>
<polyline points="1141.5,501.5 1155.3,504.8 1170.0,486.7" fill="none" stroke="#fff" stroke-width="1.2" stroke-dasharray="3 3"/>
<polyline points="1170.0,486.7 1184.8,460.5 1200.5,444.7" fill="none" stroke="#18d818" stroke-width="2.2" stroke-linejoin="round"/>
<line x1="180" y1="522.500" x2="180" y2="526.500" stroke="#fff"/>
<text x="180" y="535" font-size="10.2" fill="#fff" textLength="48" lengthAdjust="spacingAndGlyphs">10 Feb 2017</text>
<line x1="240" y1="522.500" x2="240" y2="526.500" stroke="#fff"/>
<text x="240" y="535" font-size="10.2" fill="#fff" textLength="52" lengthAdjust="spacingAndGlyphs">13 Feb 00:00</text>
<line x1="300" y1="522.500" x2="300" y2="526.500" stroke="#fff"/>
<text x="300" y="535" font-size="10.2" fill="#fff" textLength="52" lengthAdjust="spacingAndGlyphs">13 Feb 04:00</text>
<line x1="360" y1="522.500" x2="360" y2="526.500" stroke="#fff"/>
<text x="360" y="535" font-size="10.2" fill="#fff" textLength="52" lengthAdjust="spacingAndGlyphs">13 Feb 08:00</text>
<line x1="420" y1="522.500" x2="420" y2="526.500" stroke="#fff"/>
<text x="420" y="535" font-size="10.2" fill="#fff" textLength="52" lengthAdjust="spacingAndGlyphs">13 Feb 12:00</text>
<line x1="480" y1="522.500" x2="480" y2="526.500" stroke="#fff"/>
<text x="480" y="535" font-size="10.2" fill="#fff" textLength="52" lengthAdjust="spacingAndGlyphs">13 Feb 16:00</text>
<line x1="540" y1="522.500" x2="540" y2="526.500" stroke="#fff"/>
<text x="540" y="535" font-size="10.2" fill="#fff" textLength="52" lengthAdjust="spacingAndGlyphs">13 Feb 20:00</text>
<line x1="600" y1="522.500" x2="600" y2="526.500" stroke="#fff"/>
<text x="600" y="535" font-size="10.2" fill="#fff" textLength="52" lengthAdjust="spacingAndGlyphs">14 Feb 00:00</text>
<line x1="660" y1="522.500" x2="660" y2="526.500" stroke="#fff"/>
<text x="660" y="535" font-size="10.2" fill="#fff" textLength="52" lengthAdjust="spacingAndGlyphs">14 Feb 04:00</text>
<line x1="720" y1="522.500" x2="720" y2="526.500" stroke="#fff"/>
<text x="720" y="535" font-size="10.2" fill="#fff" textLength="52" lengthAdjust="spacingAndGlyphs">14 Feb 08:00</text>
<line x1="780" y1="522.500" x2="780" y2="526.500" stroke="#fff"/>
<text x="780" y="535" font-size="10.2" fill="#fff" textLength="52" lengthAdjust="spacingAndGlyphs">14 Feb 12:00</text>
<line x1="840" y1="522.500" x2="840" y2="526.500" stroke="#fff"/>
<text x="840" y="535" font-size="10.2" fill="#fff" textLength="52" lengthAdjust="spacingAndGlyphs">14 Feb 16:00</text>
<line x1="900" y1="522.500" x2="900" y2="526.500" stroke="#fff"/>
<text x="900" y="535" font-size="10.2" fill="#fff" textLength="52" lengthAdjust="spacingAndGlyphs">14 Feb 20:00</text>
<line x1="960" y1="522.500" x2="960" y2="526.500" stroke="#fff"/>
<text x="960" y="535" font-size="10.2" fill="#fff" textLength="52" lengthAdjust="spacingAndGlyphs">15 Feb 00:00</text>
<line x1="1020" y1="522.500" x2="1020" y2="526.500" stroke="#fff"/>
<text x="1020" y="535" font-size="10.2" fill="#fff" textLength="52" lengthAdjust="spacingAndGlyphs">15 Feb 04:00</text>
<line x1="1080" y1="522.500" x2="1080" y2="526.500" stroke="#fff"/>
<text x="1080" y="535" font-size="10.2" fill="#fff" textLength="52" lengthAdjust="spacingAndGlyphs">15 Feb 08:00</text>
<line x1="1140" y1="522.500" x2="1140" y2="526.500" stroke="#fff"/>
<text x="1140" y="535" font-size="10.2" fill="#fff" textLength="52" lengthAdjust="spacingAndGlyphs">15 Feb 12:00</text>
<line x1="1200" y1="522.500" x2="1200" y2="526.500" stroke="#fff"/>
<text x="1200" y="535" font-size="10.2" fill="#fff" textLength="52" lengthAdjust="spacingAndGlyphs">15 Feb 16:00</text>
</svg>
<div class="b" style="left:181px;top:140px;width:183.3px;height:55px;background:#000;"></div>
<div class="b" style="left:181px;top:140px;width:183.3px;height:53.6px;background:#000078;"></div>
<div class="b" style="left:183px;top:141px;width:42px;height:21px;background:linear-gradient(#4c4cee,#3434e4);"></div>
<div class="b" style="left:321px;top:141px;width:42px;height:21px;background:linear-gradient(#4c4cee,#3434e4);"></div>
<div class="b" style="left:183px;top:161.5px;width:89.5px;height:32px;background:linear-gradient(#3838e6,#2020d4 50%,#0a0ab0);"></div>
<div class="b" style="left:274.5px;top:161.5px;width:88.5px;height:32px;background:linear-gradient(#3838e6,#2020d4 50%,#0a0ab0);"></div>
<div class="b" style="left:187px;top:161px;width:35px;height:1px;background:#8c8cf4;"></div>
<div class="b" style="left:324px;top:161px;width:35px;height:1px;background:#8c8cf4;"></div>
<div class="t" style="top:143.5px;font-size:12.0px;color:#fff;left:103.5px;width:200px;text-align:center;transform:scaleX(0.749);transform-origin:50% 50%;">SELL</div>
<div class="t" style="top:143.5px;font-size:12.0px;color:#fff;left:241.5px;width:200px;text-align:center;transform:scaleX(0.811);transform-origin:50% 50%;">BUY</div>
<div class="b" style="left:228px;top:141px;width:91px;height:18.5px;background:#e4e4e4;border:1px solid #aaa"></div>
<div class="b" style="left:247px;top:142px;width:53px;height:16.5px;background:#fff;"></div>
<div class="t" style="top:143.0px;font-size:12.0px;color:#555;right:983.5px;transform:scaleX(0.856);transform-origin:100% 50%;">8.00</div>
<svg class="abs" style="left:234.5px;top:148.5px" width="6" height="3" viewBox="0 0 6 3"><path d="M0.300 0 H5.700 L3 3 Z" fill="#111"/></svg>
<svg class="abs" style="left:307.2px;top:148.5px" width="6" height="3" viewBox="0 0 6 3"><path d="M0.300 3 H5.700 L3 0 Z" fill="#111"/></svg>
<div class="t" style="top:176.0px;font-size:12.5px;color:#fff;font-weight:bold;left:196.5px;transform:scaleX(0.904);transform-origin:0 50%;">1.05</div>
<div class="t" style="top:160.0px;font-size:30.0px;color:#fff;line-height:34px;left:222.5px;transform:scaleX(0.929);transform-origin:0 50%;">73</div>
<div class="t" style="top:162.5px;font-size:12.0px;color:#fff;font-weight:bold;left:257.5px;transform:scaleX(0.974);transform-origin:0 50%;">3</div>
<div class="t" style="top:176.0px;font-size:12.5px;color:#fff;font-weight:bold;left:288.0px;transform:scaleX(0.904);transform-origin:0 50%;">1.05</div>
<div class="t" style="top:160.0px;font-size:30.0px;color:#fff;line-height:34px;left:314.0px;transform:scaleX(0.929);transform-origin:0 50%;">74</div>
<div class="t" style="top:162.5px;font-size:12.0px;color:#fff;font-weight:bold;left:349.0px;transform:scaleX(0.974);transform-origin:0 50%;">3</div>
<div class="b" style="left:176px;top:542px;width:1104px;height:21px;background:#f0f0f0;"></div>
<div class="b" style="left:259px;top:543.6px;width:1021px;height:1px;background:#b4b4b4;"></div>
<div class="b" style="left:176px;top:543.6px;width:5px;height:1px;background:#b4b4b4;"></div>
<div class="b" style="left:181.3px;top:543.6px;width:78px;height:18px;background:#fff;border:1px solid #222;border-top:none;box-shadow:1px 1px 0 #777"></div>
<div class="t" style="top:545.8px;font-size:11.4px;color:#111;left:191.0px;transform:scaleX(0.864);transform-origin:0 50%;">EURUSD,H1</div>
<div class="t" style="top:545.8px;font-size:11.4px;color:#606060;left:270.0px;transform:scaleX(0.872);transform-origin:0 50%;">USDJPY,H1</div>
<div class="b" style="left:334px;top:547px;width:1px;height:12.5px;background:#666;"></div>
<div class="t" style="top:545.8px;font-size:11.4px;color:#606060;left:346.0px;transform:scaleX(0.905);transform-origin:0 50%;">AUDUSD,H1</div>
<div class="b" style="left:415px;top:547px;width:1px;height:12.5px;background:#666;"></div>
<div class="t" style="top:545.8px;font-size:11.4px;color:#606060;left:428.0px;transform:scaleX(0.869);transform-origin:0 50%;">GBPUSD,H1</div>
<div class="b" style="left:496px;top:547px;width:1px;height:12.5px;background:#666;"></div>
<div class="t" style="top:545.8px;font-size:11.4px;color:#606060;left:507.0px;transform:scaleX(0.893);transform-origin:0 50%;">USDCAD,H1</div>
<div class="b" style="left:577px;top:547px;width:1px;height:12.5px;background:#666;"></div>
<div class="t" style="top:545.8px;font-size:11.4px;color:#606060;left:589.0px;transform:scaleX(0.854);transform-origin:0 50%;">GBPJPY,H1</div>
<div class="b" style="left:653px;top:547px;width:1px;height:12.5px;background:#666;"></div>
<div class="t" style="top:545.8px;font-size:11.4px;color:#606060;left:665.0px;transform:scaleX(0.912);transform-origin:0 50%;">NZDUSD,H1</div>
<div class="b" style="left:735px;top:547px;width:1px;height:12.5px;background:#666;"></div>
<div class="t" style="top:545.8px;font-size:11.4px;color:#606060;left:746.0px;transform:scaleX(0.895);transform-origin:0 50%;">USDCHF,H1</div>
<div class="b" style="left:815px;top:547px;width:1px;height:12.5px;background:#666;"></div>
<svg class="abs" style="left:1250px;top:548px" width="24" height="8" viewBox="0 0 24 8"><path d="M4 0.300 V6.700 L0.800 3.500 Z M19 0.300 V6.700 L22.200 3.500 Z" fill="#9c9c9c"/></svg>
<div class="b" style="left:0px;top:563px;width:1280px;height:82px;background:#f0f0f0;"></div>
<div class="b" style="left:0px;top:563px;width:1280px;height:2px;background:#f8f8f8;"></div>
<div class="b" style="left:1px;top:579.7px;width:12px;height:65px;background:linear-gradient(#dde8f6,#c9daf0);"></div>
<svg class="abs" style="left:3.3px;top:568.7px" width="6" height="6" viewBox="0 0 6 6"><path d="M0.500 0.500 L5.500 5.500 M5.500 0.500 L0.500 5.500" stroke="#000" stroke-width="1.500"/></svg>
<div class="b" style="left:14px;top:565.7px;width:1264px;height:79.3px;background:#fff;border-left:1px solid #bdbdbd;border-top:1px solid #c8c8c8"></div>
<div class="b" style="left:15px;top:589.6px;width:1247px;height:1px;background:#dcdcdc;"></div>
<div class="b" style="left:15px;top:608.5px;width:1246px;height:18.5px;background:#f0f0f0;"></div>
<div class="b" style="left:15px;top:627px;width:1246px;height:18px;background:#3399ff;"></div>
<div class="b" style="left:124.5px;top:566px;width:1px;height:79px;background:#e4e4e4;"></div>
<div class="b" style="left:312px;top:566px;width:1px;height:79px;background:#e4e4e4;"></div>
<div class="b" style="left:397px;top:566px;width:1px;height:79px;background:#e4e4e4;"></div>
<div class="b" style="left:464px;top:566px;width:1px;height:79px;background:#e4e4e4;"></div>
<div class="b" style="left:549px;top:566px;width:1px;height:79px;background:#e4e4e4;"></div>
<div class="b" style="left:636px;top:566px;width:1px;height:79px;background:#e4e4e4;"></div>
<div class="b" style="left:720px;top:566px;width:1px;height:79px;background:#e4e4e4;"></div>
<div class="b" style="left:805px;top:566px;width:1px;height:79px;background:#e4e4e4;"></div>
<div class="b" style="left:993.5px;top:566px;width:1px;height:79px;background:#e4e4e4;"></div>
<div class="b" style="left:1078.5px;top:566px;width:1px;height:79px;background:#e4e4e4;"></div>
<div class="b" style="left:1164px;top:566px;width:1px;height:79px;background:#e4e4e4;"></div>
<div class="t" style="top:571.0px;font-size:11.4px;color:#222;left:21.0px;transform:scaleX(0.958);transform-origin:0 50%;">Order</div>
<div class="t" style="top:572.0px;font-size:9.0px;color:#444;left:59.0px;transform:scaleX(1.200);transform-origin:0 50%;">/</div>
<div class="t" style="top:570.6px;font-size:11.4px;color:#222;right:972.0px;transform:scaleX(0.942);transform-origin:100% 50%;">Time</div>
<div class="t" style="top:570.6px;font-size:11.4px;color:#222;right:887.0px;transform:scaleX(0.934);transform-origin:100% 50%;">Type</div>
<div class="t" style="top:570.6px;font-size:11.4px;color:#222;right:820.0px;transform:scaleX(0.859);transform-origin:100% 50%;">Size</div>
<div class="t" style="top:570.6px;font-size:11.4px;color:#222;right:735.0px;transform:scaleX(0.944);transform-origin:100% 50%;">Symbol</div>
<div class="t" style="top:570.6px;font-size:11.4px;color:#222;right:649.0px;transform:scaleX(0.897);transform-origin:100% 50%;">Price</div>
<div class="t" style="top:570.6px;font-size:11.4px;color:#222;right:564.0px;transform:scaleX(0.902);transform-origin:100% 50%;">S / L</div>
<div class="t" style="top:570.6px;font-size:11.4px;color:#222;right:478.0px;transform:scaleX(0.924);transform-origin:100% 50%;">T / P</div>
<div class="t" style="top:570.6px;font-size:11.4px;color:#222;right:290.5px;transform:scaleX(0.942);transform-origin:100% 50%;">Time</div>
<div class="t" style="top:570.6px;font-size:11.4px;color:#222;right:205.5px;transform:scaleX(0.897);transform-origin:100% 50%;">Price</div>
<div class="t" style="top:570.6px;font-size:11.4px;color:#222;right:120.0px;transform:scaleX(0.898);transform-origin:100% 50%;">Swap</div>
<div class="t" style="top:570.6px;font-size:11.4px;color:#222;right:25.5px;transform:scaleX(0.979);transform-origin:100% 50%;">Profit</div>
<svg class="abs" style="left:17.5px;top:592.4px" width="13" height="14" viewBox="0 0 13 14"><path d="M1.500 0.500 H7.500 L10.500 3.500 V12.500 H1.500 Z" fill="#fff" stroke="#666" stroke-width="1"/><circle cx="9" cy="10.500" r="3" fill="#e8502a" stroke="#803010" stroke-width="0.500"/></svg>
<div class="t" style="top:592.2px;font-size:11.2px;color:#222;left:36.0px;transform:scaleX(0.909);transform-origin:0 50%;">128958864</div>
<div class="t" style="top:592.2px;font-size:11.2px;color:#222;right:969.3px;transform:scaleX(0.888);transform-origin:100% 50%;">2017.02.15 06:40:27</div>
<div class="t" style="top:592.2px;font-size:11.2px;color:#222;right:884.3px;transform:scaleX(0.894);transform-origin:100% 50%;">sell</div>
<div class="t" style="top:592.2px;font-size:11.2px;color:#222;right:817.3px;transform:scaleX(0.883);transform-origin:100% 50%;">8.00</div>
<div class="t" style="top:592.2px;font-size:11.2px;color:#222;right:732.3px;transform:scaleX(0.924);transform-origin:100% 50%;">eurusd</div>
<div class="t" style="top:592.2px;font-size:11.2px;color:#222;right:646.3px;transform:scaleX(0.895);transform-origin:100% 50%;">1.05801</div>
<div class="t" style="top:592.2px;font-size:11.2px;color:#222;right:561.3px;transform:scaleX(0.895);transform-origin:100% 50%;">0.00000</div>
<div class="t" style="top:592.2px;font-size:11.2px;color:#222;right:475.3px;transform:scaleX(0.895);transform-origin:100% 50%;">0.00000</div>
<div class="t" style="top:592.2px;font-size:11.2px;color:#222;right:287.8px;transform:scaleX(0.895);transform-origin:100% 50%;">2017.02.15 11:48:04</div>
<div class="t" style="top:592.2px;font-size:11.2px;color:#222;right:202.8px;transform:scaleX(0.895);transform-origin:100% 50%;">1.05512</div>
<div class="t" style="top:592.2px;font-size:11.2px;color:#222;right:117.3px;transform:scaleX(0.883);transform-origin:100% 50%;">0.00</div>
<div class="t" style="top:592.2px;font-size:11.2px;color:#222;right:22.8px;transform:scaleX(0.897);transform-origin:100% 50%;">2 312.00</div>
<svg class="abs" style="left:17.5px;top:610.9px" width="13" height="14" viewBox="0 0 13 14"><path d="M1.500 0.500 H7.500 L10.500 3.500 V12.500 H1.500 Z" fill="#fff" stroke="#666" stroke-width="1"/><circle cx="9" cy="10.500" r="3" fill="#2f8fe8" stroke="#803010" stroke-width="0.500"/></svg>
<div class="t" style="top:610.7px;font-size:11.2px;color:#222;left:36.0px;transform:scaleX(0.909);transform-origin:0 50%;">128989892</div>
<div class="t" style="top:610.7px;font-size:11.2px;color:#222;right:969.3px;transform:scaleX(0.888);transform-origin:100% 50%;">2017.02.15 12:22:36</div>
<div class="t" style="top:610.7px;font-size:11.2px;color:#222;right:884.3px;transform:scaleX(0.952);transform-origin:100% 50%;">buy</div>
<div class="t" style="top:610.7px;font-size:11.2px;color:#222;right:817.3px;transform:scaleX(0.883);transform-origin:100% 50%;">8.00</div>
<div class="t" style="top:610.7px;font-size:11.2px;color:#222;right:732.3px;transform:scaleX(0.924);transform-origin:100% 50%;">eurusd</div>
<div class="t" style="top:610.7px;font-size:11.2px;color:#222;right:646.3px;transform:scaleX(0.895);transform-origin:100% 50%;">1.05573</div>
<div class="t" style="top:610.7px;font-size:11.2px;color:#222;right:561.3px;transform:scaleX(0.895);transform-origin:100% 50%;">0.00000</div>
<div class="t" style="top:610.7px;font-size:11.2px;color:#222;right:475.3px;transform:scaleX(0.895);transform-origin:100% 50%;">0.00000</div>
<div class="t" style="top:610.7px;font-size:11.2px;color:#222;right:287.8px;transform:scaleX(0.888);transform-origin:100% 50%;">2017.02.15 15:18:13</div>
<div class="t" style="top:610.7px;font-size:11.2px;color:#222;right:202.8px;transform:scaleX(0.895);transform-origin:100% 50%;">1.05685</div>
<div class="t" style="top:610.7px;font-size:11.2px;color:#222;right:117.3px;transform:scaleX(0.883);transform-origin:100% 50%;">0.00</div>
<div class="t" style="top:610.7px;font-size:11.2px;color:#222;right:22.8px;transform:scaleX(0.892);transform-origin:100% 50%;">896.00</div>
<svg class="abs" style="left:17.5px;top:629.4px" width="13" height="14" viewBox="0 0 13 14"><path d="M1.500 0.500 H7.500 L10.500 3.500 V12.500 H1.500 Z" fill="#fff" stroke="#666" stroke-width="1"/><circle cx="9" cy="10.500" r="3" fill="#e8502a" stroke="#803010" stroke-width="0.500"/></svg>
<div class="t" style="top:629.2px;font-size:11.2px;color:#fff;left:36.0px;transform:scaleX(0.909);transform-origin:0 50%;">128989914</div>
<div class="t" style="top:629.2px;font-size:11.2px;color:#fff;right:969.3px;transform:scaleX(0.888);transform-origin:100% 50%;">2017.02.15 12:23:17</div>
<div class="t" style="top:629.2px;font-size:11.2px;color:#fff;right:884.3px;transform:scaleX(0.894);transform-origin:100% 50%;">sell</div>
<div class="t" style="top:629.2px;font-size:11.2px;color:#fff;right:817.3px;transform:scaleX(0.883);transform-origin:100% 50%;">8.00</div>
<div class="t" style="top:629.2px;font-size:11.2px;color:#fff;right:732.3px;transform:scaleX(0.929);transform-origin:100% 50%;">usdchf</div>
<div class="t" style="top:629.2px;font-size:11.2px;color:#fff;right:646.3px;transform:scaleX(0.895);transform-origin:100% 50%;">1.00872</div>
<div class="t" style="top:629.2px;font-size:11.2px;color:#fff;right:561.3px;transform:scaleX(0.895);transform-origin:100% 50%;">0.00000</div>
<div class="t" style="top:629.2px;font-size:11.2px;color:#fff;right:475.3px;transform:scaleX(0.895);transform-origin:100% 50%;">0.00000</div>
<div class="t" style="top:629.2px;font-size:11.2px;color:#fff;right:287.8px;transform:scaleX(0.888);transform-origin:100% 50%;">2017.02.15 15:18:25</div>
<div class="t" style="top:629.2px;font-size:11.2px;color:#fff;right:202.8px;transform:scaleX(0.895);transform-origin:100% 50%;">1.00725</div>
<div class="t" style="top:629.2px;font-size:11.2px;color:#fff;right:117.3px;transform:scaleX(0.883);transform-origin:100% 50%;">0.00</div>
<div class="t" style="top:629.2px;font-size:11.2px;color:#fff;right:22.8px;transform:scaleX(0.897);transform-origin:100% 50%;">1 167.54</div>
<div class="b" style="left:1262px;top:566px;width:16px;height:79px;background:#f0f0f0;"></div>
<svg class="abs" style="left:1264.5px;top:573px" width="10" height="7" viewBox="0 0 10 7"><path d="M1 6 L5 1.600 L9 6" fill="none" stroke="#303030" stroke-width="1.700"/></svg>
<div class="b" style="left:1262.2px;top:634px;width:13.5px;height:11px;background:#cdcdcd;"></div>
</body></html>
